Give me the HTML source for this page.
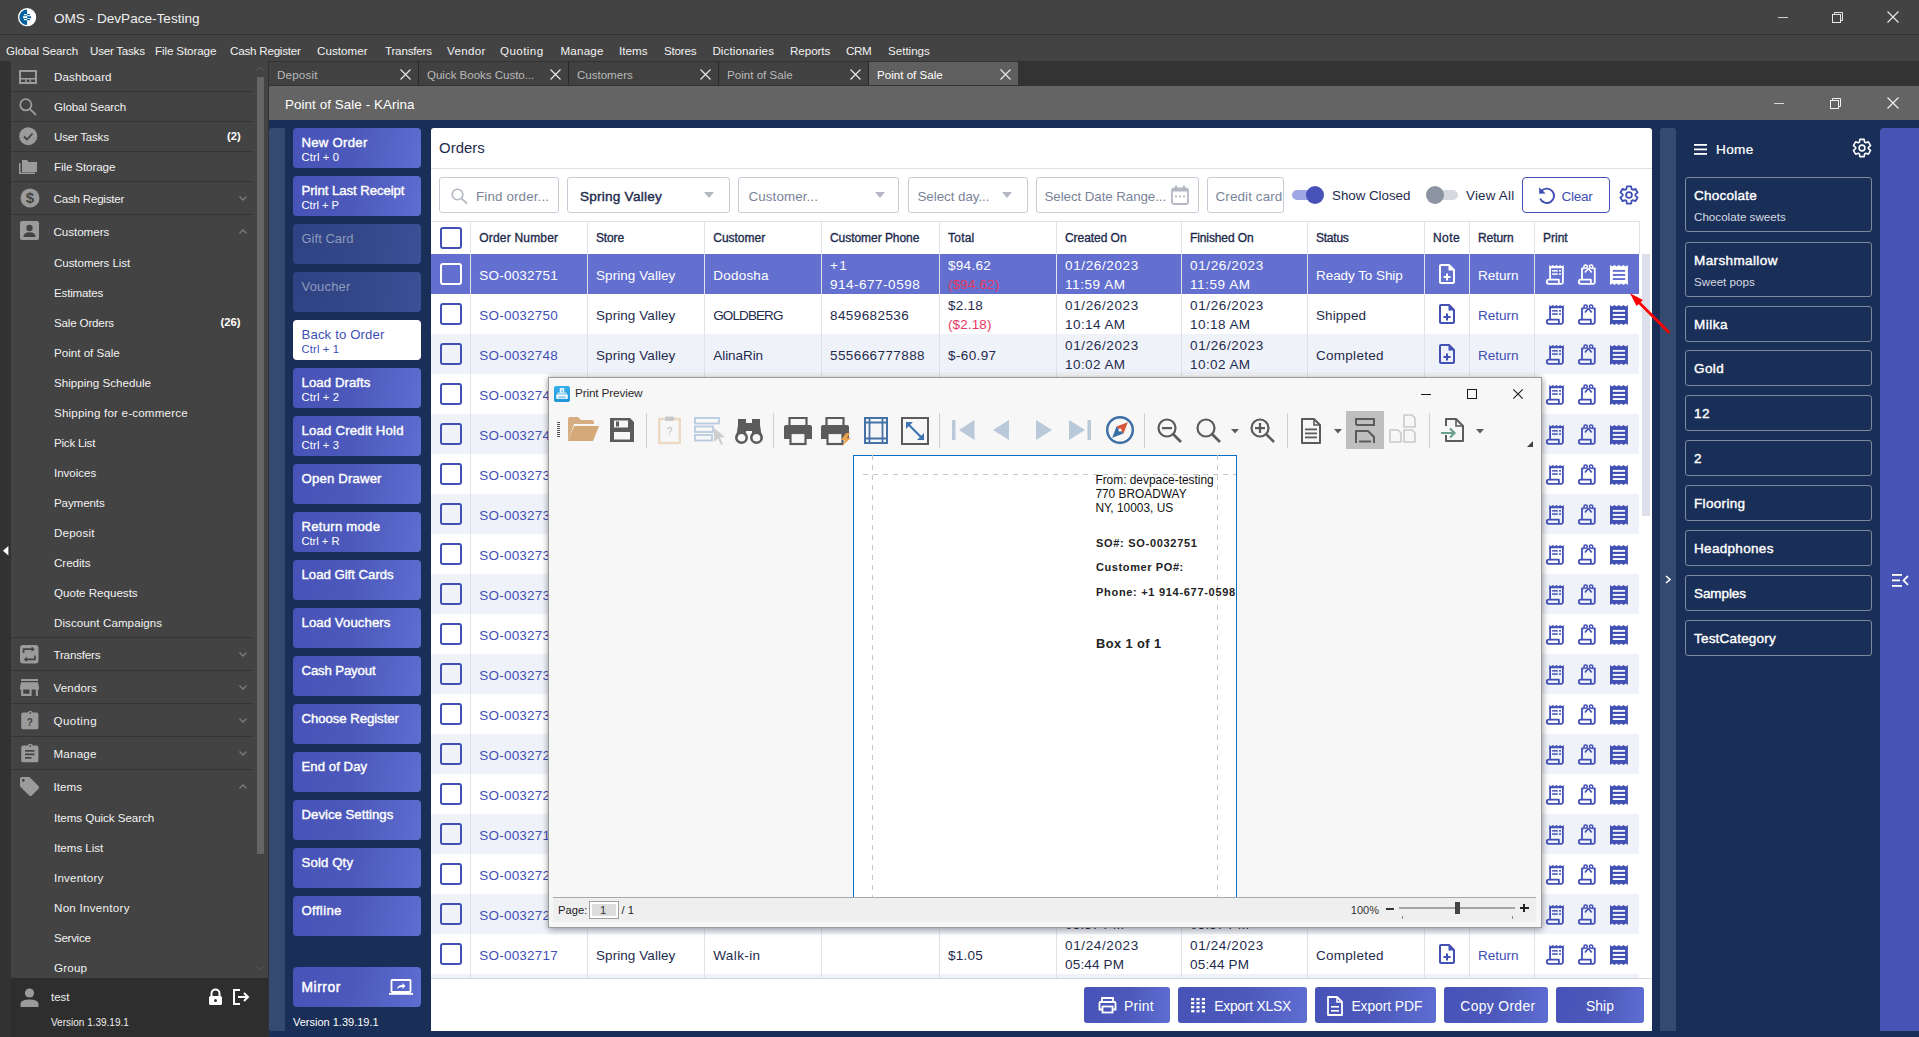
<!DOCTYPE html>
<html><head><meta charset="utf-8"><style>
*{margin:0;padding:0;box-sizing:border-box}
html,body{width:1919px;height:1037px;overflow:hidden;background:#3c3c3c;font-family:"Liberation Sans",sans-serif;position:relative}
.a{position:absolute}
.t{position:absolute;white-space:pre;line-height:1}
svg{position:absolute;overflow:visible}
.btn{position:absolute;left:293px;width:128px;height:40px;border-radius:4px;background:linear-gradient(100deg,#4753b6 0%,#4c59bb 45%,#5e6dd0 100%)}
.btn.dis{background:linear-gradient(100deg,#2f4283 0%,#334789 50%,#3b5096 100%)}
.btn.wh{background:#ffffff}

</style></head><body>
<div class="a " style="left:0px;top:0px;width:1919px;height:34px;background:#434343;"></div>
<div class="a " style="left:0px;top:34px;width:1919px;height:1px;background:#323232;"></div>
<div class="a " style="left:0px;top:35px;width:1919px;height:26px;background:#434343;"></div>
<svg style="left:17.9px;top:7.8px;" width="18.2" height="18.4" viewBox="0 0 18.2 18.4"><circle cx="9.1" cy="9.2" r="9.1" fill="#ffffff"/><path d="M9.1 1.4 A7.8 7.8 0 0 0 9.1 17 Z" fill="#04609e"/><rect x="5.9" y="6.1" width="3.3" height="1.2" fill="#fff"/><rect x="5.1" y="8.2" width="4.1" height="2" fill="#fff"/><rect x="5.9" y="11" width="3.3" height="1.2" fill="#fff"/><rect x="9.1" y="6.1" width="3" height="1.2" rx="0.5" fill="#04609e"/><rect x="9.1" y="8.2" width="4" height="2" rx="0.5" fill="#04609e"/><rect x="9.1" y="11" width="3" height="1.2" rx="0.5" fill="#04609e"/></svg>
<div class="t " style="left:54px;top:11.64px;font-size:13.6px;color:#f0f0f0;letter-spacing:-0.012px;">OMS - DevPace-Testing</div>
<div class="a " style="left:1777.5px;top:16.5px;width:10.5px;height:1.3px;background:#d0d0d0;"></div>
<svg style="left:1832px;top:12px;" width="12" height="11" viewBox="0 0 12 11"><rect x="0.5" y="2.5" width="8" height="8" fill="none" stroke="#e8e8e8"/><path d="M2.5 2.5 V0.5 H10.5 V8.5 H8.5" fill="none" stroke="#e8e8e8"/></svg>
<svg style="left:1887px;top:11px;" width="12" height="12" viewBox="0 0 12 12"><path d="M0.5 0.5 L11.5 11.5 M11.5 0.5 L0.5 11.5" stroke="#e8e8e8" stroke-width="1.2"/></svg>
<div class="t " style="left:6px;top:44.81px;font-size:11.6px;color:#f2f2f2;letter-spacing:-0.105px;">Global Search</div>
<div class="t " style="left:90px;top:44.81px;font-size:11.6px;color:#f2f2f2;letter-spacing:-0.24px;">User Tasks</div>
<div class="t " style="left:155px;top:44.81px;font-size:11.6px;color:#f2f2f2;letter-spacing:-0.106px;">File Storage</div>
<div class="t " style="left:230px;top:44.81px;font-size:11.6px;color:#f2f2f2;letter-spacing:-0.211px;">Cash Register</div>
<div class="t " style="left:317px;top:44.81px;font-size:11.6px;color:#f2f2f2;letter-spacing:0.065px;">Customer</div>
<div class="t " style="left:385px;top:44.81px;font-size:11.6px;color:#f2f2f2;letter-spacing:-0.195px;">Transfers</div>
<div class="t " style="left:447px;top:44.81px;font-size:11.6px;color:#f2f2f2;letter-spacing:0.307px;">Vendor</div>
<div class="t " style="left:500px;top:44.81px;font-size:11.6px;color:#f2f2f2;letter-spacing:0.43px;">Quoting</div>
<div class="t " style="left:560.5px;top:44.81px;font-size:11.6px;color:#f2f2f2;letter-spacing:0.194px;">Manage</div>
<div class="t " style="left:619px;top:44.81px;font-size:11.6px;color:#f2f2f2;letter-spacing:0.078px;">Items</div>
<div class="t " style="left:664px;top:44.81px;font-size:11.6px;color:#f2f2f2;letter-spacing:-0.189px;">Stores</div>
<div class="t " style="left:712.4px;top:44.81px;font-size:11.6px;color:#f2f2f2;letter-spacing:0.089px;">Dictionaries</div>
<div class="t " style="left:790px;top:44.81px;font-size:11.6px;color:#f2f2f2;letter-spacing:-0.045px;">Reports</div>
<div class="t " style="left:846px;top:44.81px;font-size:11.6px;color:#f2f2f2;letter-spacing:-0.397px;">CRM</div>
<div class="t " style="left:888px;top:44.81px;font-size:11.6px;color:#f2f2f2;letter-spacing:-0.006px;">Settings</div>
<div class="a " style="left:0px;top:61px;width:11px;height:976px;background:#323232;"></div>
<div class="a " style="left:11px;top:61px;width:257px;height:917px;background:#434343;"></div>
<div class="a " style="left:257px;top:77px;width:7px;height:777px;background:#656565;"></div>
<svg style="left:256px;top:66px;" width="8" height="5" viewBox="0 0 8 5"><path d="M0.5 4.5 L4 1 L7.5 4.5" fill="none" stroke="#5a5a5a" stroke-width="1"/></svg>
<svg style="left:256px;top:966px;" width="8" height="5" viewBox="0 0 8 5"><path d="M0.5 0.5 L4 4 L7.5 0.5" fill="none" stroke="#5a5a5a" stroke-width="1"/></svg>
<div class="a " style="left:268px;top:61px;width:1px;height:976px;background:#313131;"></div>
<svg style="left:2.75px;top:545.7px;" width="6" height="10" viewBox="0 0 6 10"><path d="M5.35 0 L5.35 9.5 L0 4.75 Z" fill="#ffffff"/></svg>
<div class="a " style="left:11px;top:91px;width:242px;height:1px;background:#363636;"></div>
<div class="a " style="left:11px;top:121px;width:242px;height:1px;background:#363636;"></div>
<div class="a " style="left:11px;top:151px;width:242px;height:1px;background:#363636;"></div>
<div class="a " style="left:11px;top:181px;width:242px;height:1px;background:#363636;"></div>
<div class="a " style="left:11px;top:214px;width:242px;height:1px;background:#363636;"></div>
<div class="a " style="left:11px;top:637px;width:242px;height:1px;background:#363636;"></div>
<div class="a " style="left:11px;top:670px;width:242px;height:1px;background:#363636;"></div>
<div class="a " style="left:11px;top:703px;width:242px;height:1px;background:#363636;"></div>
<div class="a " style="left:11px;top:736px;width:242px;height:1px;background:#363636;"></div>
<div class="a " style="left:11px;top:769px;width:242px;height:1px;background:#363636;"></div>
<div class="t " style="left:54px;top:71.41px;font-size:11.6px;color:#f2f2f2;letter-spacing:0.106px;">Dashboard</div>
<div class="t " style="left:54px;top:101.41px;font-size:11.6px;color:#f2f2f2;letter-spacing:-0.105px;">Global Search</div>
<div class="t " style="left:54px;top:131.41px;font-size:11.6px;color:#f2f2f2;letter-spacing:-0.24px;">User Tasks</div>
<div class="t " style="left:54px;top:161.21px;font-size:11.6px;color:#f2f2f2;letter-spacing:-0.106px;">File Storage</div>
<div class="t " style="left:53.5px;top:192.91px;font-size:11.6px;color:#f2f2f2;letter-spacing:-0.211px;">Cash Register</div>
<div class="t " style="left:53.5px;top:225.91px;font-size:11.6px;color:#f2f2f2;letter-spacing:-0.036px;">Customers</div>
<div class="t " style="left:53.5px;top:648.71px;font-size:11.6px;color:#f2f2f2;letter-spacing:-0.195px;">Transfers</div>
<div class="t " style="left:53.5px;top:681.71px;font-size:11.6px;color:#f2f2f2;letter-spacing:0.142px;">Vendors</div>
<div class="t " style="left:53.5px;top:714.71px;font-size:11.6px;color:#f2f2f2;letter-spacing:0.43px;">Quoting</div>
<div class="t " style="left:53.5px;top:747.71px;font-size:11.6px;color:#f2f2f2;letter-spacing:0.194px;">Manage</div>
<div class="t " style="left:53.5px;top:780.71px;font-size:11.6px;color:#f2f2f2;letter-spacing:0.078px;">Items</div>
<div class="t " style="left:54px;top:257.21px;font-size:11.6px;color:#f2f2f2;letter-spacing:-0.081px;">Customers List</div>
<div class="t " style="left:54px;top:287.21px;font-size:11.6px;color:#f2f2f2;letter-spacing:-0.194px;">Estimates</div>
<div class="t " style="left:54px;top:317.21px;font-size:11.6px;color:#f2f2f2;letter-spacing:-0.173px;">Sale Orders</div>
<div class="t " style="left:54px;top:347.21px;font-size:11.6px;color:#f2f2f2;letter-spacing:-0.003px;">Point of Sale</div>
<div class="t " style="left:54px;top:377.21px;font-size:11.6px;color:#f2f2f2;letter-spacing:0.017px;">Shipping Schedule</div>
<div class="t " style="left:54px;top:407.21px;font-size:11.6px;color:#f2f2f2;letter-spacing:0.186px;">Shipping for e-commerce</div>
<div class="t " style="left:54px;top:437.21px;font-size:11.6px;color:#f2f2f2;letter-spacing:-0.226px;">Pick List</div>
<div class="t " style="left:54px;top:467.21px;font-size:11.6px;color:#f2f2f2;letter-spacing:-0.043px;">Invoices</div>
<div class="t " style="left:54px;top:497.21px;font-size:11.6px;color:#f2f2f2;letter-spacing:-0.123px;">Payments</div>
<div class="t " style="left:54px;top:527.21px;font-size:11.6px;color:#f2f2f2;letter-spacing:0.195px;">Deposit</div>
<div class="t " style="left:54px;top:557.21px;font-size:11.6px;color:#f2f2f2;letter-spacing:-0.044px;">Credits</div>
<div class="t " style="left:54px;top:587.21px;font-size:11.6px;color:#f2f2f2;letter-spacing:-0.009px;">Quote Requests</div>
<div class="t " style="left:54px;top:617.21px;font-size:11.6px;color:#f2f2f2;letter-spacing:0.068px;">Discount Campaigns</div>
<div class="t " style="left:54px;top:812.21px;font-size:11.6px;color:#f2f2f2;letter-spacing:-0.058px;">Items Quick Search</div>
<div class="t " style="left:54px;top:842.21px;font-size:11.6px;color:#f2f2f2;letter-spacing:-0.042px;">Items List</div>
<div class="t " style="left:54px;top:872.21px;font-size:11.6px;color:#f2f2f2;letter-spacing:0.195px;">Inventory</div>
<div class="t " style="left:54px;top:902.21px;font-size:11.6px;color:#f2f2f2;letter-spacing:0.272px;">Non Inventory</div>
<div class="t " style="left:54px;top:932.21px;font-size:11.6px;color:#f2f2f2;letter-spacing:-0.305px;">Service</div>
<div class="t " style="left:54px;top:962.21px;font-size:11.6px;color:#f2f2f2;letter-spacing:0.205px;">Group</div>
<div class="t " style="left:227px;top:131.25px;font-size:11.3px;color:#ffffff;font-weight:700;">(2)</div>
<div class="t " style="left:220.5px;top:317.05px;font-size:11.3px;color:#ffffff;font-weight:700;">(26)</div>
<svg style="left:238.5px;top:195.5px;" width="8" height="5" viewBox="0 0 8 5"><path d="M0.5 0.5 L4 4 L7.5 0.5" fill="none" stroke="#7d7d7d" stroke-width="1.3"/></svg>
<svg style="left:238.5px;top:228.5px;" width="8" height="5" viewBox="0 0 8 5"><path d="M0.5 4.5 L4 1 L7.5 4.5" fill="none" stroke="#7d7d7d" stroke-width="1.3"/></svg>
<svg style="left:238.5px;top:651.5px;" width="8" height="5" viewBox="0 0 8 5"><path d="M0.5 0.5 L4 4 L7.5 0.5" fill="none" stroke="#7d7d7d" stroke-width="1.3"/></svg>
<svg style="left:238.5px;top:684.5px;" width="8" height="5" viewBox="0 0 8 5"><path d="M0.5 0.5 L4 4 L7.5 0.5" fill="none" stroke="#7d7d7d" stroke-width="1.3"/></svg>
<svg style="left:238.5px;top:717.5px;" width="8" height="5" viewBox="0 0 8 5"><path d="M0.5 0.5 L4 4 L7.5 0.5" fill="none" stroke="#7d7d7d" stroke-width="1.3"/></svg>
<svg style="left:238.5px;top:750.5px;" width="8" height="5" viewBox="0 0 8 5"><path d="M0.5 0.5 L4 4 L7.5 0.5" fill="none" stroke="#7d7d7d" stroke-width="1.3"/></svg>
<svg style="left:238.5px;top:783.5px;" width="8" height="5" viewBox="0 0 8 5"><path d="M0.5 4.5 L4 1 L7.5 4.5" fill="none" stroke="#7d7d7d" stroke-width="1.3"/></svg>
<svg style="left:19px;top:70px;" width="18" height="14" viewBox="0 0 18 14"><rect x="1" y="1" width="16" height="12" fill="none" stroke="#9b9b9b" stroke-width="2"/><rect x="1" y="8" width="16" height="1.6" fill="#9b9b9b"/><rect x="6.3" y="8" width="1.4" height="5" fill="#9b9b9b"/><rect x="10.6" y="8" width="1.4" height="5" fill="#9b9b9b"/></svg>
<svg style="left:19px;top:98px;" width="18" height="18" viewBox="0 0 18 18"><circle cx="6.8" cy="6.8" r="5.6" fill="none" stroke="#9b9b9b" stroke-width="1.8"/><path d="M10.8 10.8 L17 17" stroke="#9b9b9b" stroke-width="1.8"/></svg>
<svg style="left:19px;top:127px;" width="19" height="19" viewBox="0 0 19 19"><circle cx="9.2" cy="9.2" r="9" fill="#9b9b9b"/><path d="M5 9.5 L8 12.5 L13.5 6.5" fill="none" stroke="#434343" stroke-width="1.8"/></svg>
<svg style="left:19px;top:159.5px;" width="19" height="16" viewBox="0 0 19 16"><path d="M0 3 V14 H16 V12.5 H1.5 V3 Z" fill="#9b9b9b"/><path d="M3 0 H8 L9.5 2 H18 V12 H3 Z" fill="#9b9b9b"/></svg>
<svg style="left:20px;top:188px;" width="20" height="20" viewBox="0 0 20 20"><circle cx="10" cy="10" r="9.5" fill="#9b9b9b"/><text x="10" y="15.3" font-family="Liberation Sans" font-size="15" font-weight="700" text-anchor="middle" fill="#434343">$</text></svg>
<svg style="left:20px;top:221px;" width="19" height="19" viewBox="0 0 19 19"><rect x="0" y="0" width="19" height="19" rx="2" fill="#9b9b9b"/><circle cx="9.5" cy="7" r="3.2" fill="#434343"/><path d="M3.5 16 Q3.5 11.2 9.5 11.2 Q15.5 11.2 15.5 16 Z" fill="#434343"/></svg>
<svg style="left:20.2px;top:644.6px;" width="18.5" height="18.6" viewBox="0 0 18.5 18.6"><rect x="0" y="0" width="18.5" height="18.6" rx="3" fill="#9b9b9b"/><path d="M3.6 8 V4.2 H12.5" fill="none" stroke="#434343" stroke-width="1.7"/><path d="M11.5 1.6 L14.8 4.2 L11.5 6.8 Z" fill="#434343"/><path d="M14.9 10.6 V14.4 H6" fill="none" stroke="#434343" stroke-width="1.7"/><path d="M7 11.8 L3.7 14.4 L7 17 Z" fill="#434343"/></svg>
<svg style="left:19.9px;top:678.6px;" width="19" height="17" viewBox="0 0 19 17"><g transform="scale(1.056) translate(-3,-4)"><path d="M20 4H4v2h16V4zm1 10v-2l-1-5H4l-1 5v2h1v6h10v-6h4v6h2v-6h1zm-9 4H6v-4h6v4z" fill="#9b9b9b"/></g></svg>
<svg style="left:20.7px;top:710.2px;" width="18" height="20" viewBox="0 0 18 20"><path d="M15.5 2.6 H11.8 C11.4 1.5 10.5 0.8 9.3 0.8 C8.1 0.8 7.2 1.5 6.8 2.6 H2.1 C1 2.6 0.2 3.4 0.2 4.5 V17.4 C0.2 18.5 1 19.3 2.1 19.3 H15.5 C16.6 19.3 17.4 18.5 17.4 17.4 V4.5 C17.4 3.4 16.6 2.6 15.5 2.6 Z" fill="#9b9b9b"/><circle cx="9.3" cy="3.1" r="0.9" fill="#434343"/><text x="8.8" y="15.6" font-family="Liberation Sans" font-size="10" font-weight="700" text-anchor="middle" fill="#434343">?</text></svg>
<svg style="left:20.7px;top:743.2px;" width="18" height="20" viewBox="0 0 18 20"><path d="M15.5 2.6 H11.8 C11.4 1.5 10.5 0.8 9.3 0.8 C8.1 0.8 7.2 1.5 6.8 2.6 H2.1 C1 2.6 0.2 3.4 0.2 4.5 V17.4 C0.2 18.5 1 19.3 2.1 19.3 H15.5 C16.6 19.3 17.4 18.5 17.4 17.4 V4.5 C17.4 3.4 16.6 2.6 15.5 2.6 Z" fill="#9b9b9b"/><circle cx="9.3" cy="3.1" r="0.9" fill="#434343"/><rect x="4" y="7" width="9.5" height="1.7" fill="#434343"/><rect x="4" y="10.5" width="9.5" height="1.7" fill="#434343"/><rect x="4" y="14" width="6.5" height="1.7" fill="#434343"/></svg>
<svg style="left:19.9px;top:776.8px;" width="19" height="19" viewBox="0 0 19 19"><g transform="scale(0.95) translate(-2,-2)"><path d="M21.41 11.58l-9-9C12.05 2.22 11.55 2 11 2H4c-1.1 0-2 .9-2 2v7c0 .55.22 1.05.59 1.42l9 9c.36.36.86.58 1.41.58.55 0 1.05-.22 1.41-.59l7-7c.37-.36.59-.86.59-1.41 0-.55-.23-1.06-.59-1.42zM5.5 7C4.67 7 4 6.33 4 5.5S4.67 4 5.5 4 7 4.67 7 5.5 6.33 7 5.5 7z" fill="#9b9b9b"/></g></svg>
<div class="a " style="left:11px;top:978px;width:257px;height:59px;background:#2e2e2e;"></div>
<svg style="left:20px;top:988px;" width="19" height="19" viewBox="0 0 19 19"><circle cx="9.5" cy="5" r="4.6" fill="#9b9b9b"/><path d="M0.5 19 V16 Q0.5 11.5 9.5 11.5 Q18.5 11.5 18.5 16 V19 Z" fill="#9b9b9b"/></svg>
<div class="t " style="left:51px;top:991.96px;font-size:11.5px;color:#f0f0f0;">test</div>
<svg style="left:208px;top:989px;" width="15" height="16" viewBox="0 0 15 16"><path d="M3.5 7 V4.5 A4 4 0 0 1 11.5 4.5 V7" fill="none" stroke="#fff" stroke-width="2"/><rect x="1" y="7" width="13" height="9" rx="1.5" fill="#fff"/><circle cx="7.5" cy="11.5" r="1.5" fill="#2e2e2e"/></svg>
<svg style="left:233px;top:989px;" width="18" height="16" viewBox="0 0 18 16"><path d="M7 1 H1 V15 H7" fill="none" stroke="#fff" stroke-width="2"/><path d="M5 8 H15 M11 4 L15 8 L11 12" fill="none" stroke="#fff" stroke-width="2"/></svg>
<div class="t " style="left:51px;top:1017.98px;font-size:10.0px;color:#f0f0f0;">Version 1.39.19.1</div>
<div class="a " style="left:269px;top:61px;width:1650px;height:25px;background:#333333;"></div>
<div class="a " style="left:269px;top:62px;width:149px;height:23px;background:#414141;"></div>
<div class="t " style="left:277px;top:69.11px;font-size:11.6px;color:#bababa;letter-spacing:0.195px;">Deposit</div>
<svg style="left:400.0px;top:68.5px;" width="11" height="11" viewBox="0 0 11 11"><path d="M0.5 0.5 L10.5 10.5 M10.5 0.5 L0.5 10.5" stroke="#e8e8e8" stroke-width="1.2"/></svg>
<div class="a " style="left:419px;top:62px;width:149px;height:23px;background:#414141;"></div>
<div class="t " style="left:427px;top:69.11px;font-size:11.6px;color:#bababa;letter-spacing:-0.049px;">Quick Books Custo...</div>
<svg style="left:550.0px;top:68.5px;" width="11" height="11" viewBox="0 0 11 11"><path d="M0.5 0.5 L10.5 10.5 M10.5 0.5 L0.5 10.5" stroke="#e8e8e8" stroke-width="1.2"/></svg>
<div class="a " style="left:569px;top:62px;width:149px;height:23px;background:#414141;"></div>
<div class="t " style="left:577px;top:69.11px;font-size:11.6px;color:#bababa;letter-spacing:-0.036px;">Customers</div>
<svg style="left:700.0px;top:68.5px;" width="11" height="11" viewBox="0 0 11 11"><path d="M0.5 0.5 L10.5 10.5 M10.5 0.5 L0.5 10.5" stroke="#e8e8e8" stroke-width="1.2"/></svg>
<div class="a " style="left:719px;top:62px;width:149px;height:23px;background:#414141;"></div>
<div class="t " style="left:727px;top:69.11px;font-size:11.6px;color:#bababa;letter-spacing:-0.003px;">Point of Sale</div>
<svg style="left:850.0px;top:68.5px;" width="11" height="11" viewBox="0 0 11 11"><path d="M0.5 0.5 L10.5 10.5 M10.5 0.5 L0.5 10.5" stroke="#e8e8e8" stroke-width="1.2"/></svg>
<div class="a " style="left:869px;top:62px;width:149px;height:23px;background:#5f5f5f;"></div>
<div class="t " style="left:877px;top:69.11px;font-size:11.6px;color:#ffffff;letter-spacing:-0.003px;">Point of Sale</div>
<svg style="left:1000.0px;top:68.5px;" width="11" height="11" viewBox="0 0 11 11"><path d="M0.5 0.5 L10.5 10.5 M10.5 0.5 L0.5 10.5" stroke="#e8e8e8" stroke-width="1.2"/></svg>
<div class="a " style="left:418px;top:62px;width:1px;height:23px;background:#2a2a2a;"></div>
<div class="a " style="left:568px;top:62px;width:1px;height:23px;background:#2a2a2a;"></div>
<div class="a " style="left:718px;top:62px;width:1px;height:23px;background:#2a2a2a;"></div>
<div class="a " style="left:868px;top:62px;width:1px;height:23px;background:#2a2a2a;"></div>
<div class="a " style="left:269px;top:86px;width:1650px;height:34px;background:#646464;"></div>
<div class="t " style="left:285px;top:97.74px;font-size:13.4px;color:#ffffff;letter-spacing:0.073px;">Point of Sale - KArina</div>
<div class="a " style="left:1773.5px;top:102.5px;width:10.5px;height:1.3px;background:#d8d8d8;"></div>
<svg style="left:1830px;top:98px;" width="12" height="11" viewBox="0 0 12 11"><rect x="0.5" y="2.5" width="8" height="8" fill="none" stroke="#f0f0f0"/><path d="M2.5 2.5 V0.5 H10.5 V8.5 H8.5" fill="none" stroke="#f0f0f0"/></svg>
<svg style="left:1887px;top:97px;" width="12" height="12" viewBox="0 0 12 12"><path d="M0.5 0.5 L11.5 11.5 M11.5 0.5 L0.5 11.5" stroke="#f0f0f0" stroke-width="1.2"/></svg>
<div class="a " style="left:269px;top:120px;width:1650px;height:917px;background:#1a2f57;"></div><div class="a " style="left:269px;top:128px;width:16px;height:903px;background:#344a6e;border-radius:3px 0 0 3px"></div>
<div class="btn " style="top:128px"><div class="t " style="left:8.5px;top:7.94px;font-size:13.2px;color:#ffffff;letter-spacing:0.252px;-webkit-text-stroke:0.4px #ffffff;">New Order</div><div class="t " style="left:8.5px;top:23.60px;font-size:11.2px;color:#ffffff;letter-spacing:0.172px;">Ctrl + 0</div></div>
<div class="btn " style="top:176px"><div class="t " style="left:8.5px;top:7.94px;font-size:13.2px;color:#ffffff;letter-spacing:-0.062px;-webkit-text-stroke:0.4px #ffffff;">Print Last Receipt</div><div class="t " style="left:8.5px;top:23.60px;font-size:11.2px;color:#ffffff;letter-spacing:-0.012px;">Ctrl + P</div></div>
<div class="btn dis" style="top:224px"><div class="t " style="left:8.5px;top:8.23px;font-size:13.0px;color:#8e9bbd;letter-spacing:0.009px;">Gift Card</div></div>
<div class="btn dis" style="top:272px"><div class="t " style="left:8.5px;top:8.23px;font-size:13.0px;color:#8e9bbd;letter-spacing:0.18px;">Voucher</div></div>
<div class="btn wh" style="top:320px"><div class="t " style="left:8.5px;top:8.14px;font-size:13.2px;color:#3f4fb3;letter-spacing:0.132px;">Back to Order</div><div class="t " style="left:8.5px;top:23.60px;font-size:11.2px;color:#3f4fb3;letter-spacing:0.172px;">Ctrl + 1</div></div>
<div class="btn " style="top:368px"><div class="t " style="left:8.5px;top:7.94px;font-size:13.2px;color:#ffffff;letter-spacing:0.077px;-webkit-text-stroke:0.4px #ffffff;">Load Drafts</div><div class="t " style="left:8.5px;top:23.60px;font-size:11.2px;color:#ffffff;letter-spacing:0.172px;">Ctrl + 2</div></div>
<div class="btn " style="top:416px"><div class="t " style="left:8.5px;top:7.94px;font-size:13.2px;color:#ffffff;letter-spacing:0.203px;-webkit-text-stroke:0.4px #ffffff;">Load Credit Hold</div><div class="t " style="left:8.5px;top:23.60px;font-size:11.2px;color:#ffffff;letter-spacing:0.172px;">Ctrl + 3</div></div>
<div class="btn " style="top:464px"><div class="t " style="left:8.5px;top:7.94px;font-size:13.2px;color:#ffffff;letter-spacing:0.159px;-webkit-text-stroke:0.4px #ffffff;">Open Drawer</div></div>
<div class="btn " style="top:512px"><div class="t " style="left:8.5px;top:7.94px;font-size:13.2px;color:#ffffff;letter-spacing:0.227px;-webkit-text-stroke:0.4px #ffffff;">Return mode</div><div class="t " style="left:8.5px;top:23.60px;font-size:11.2px;color:#ffffff;letter-spacing:-0.038px;">Ctrl + R</div></div>
<div class="btn " style="top:560px"><div class="t " style="left:8.5px;top:7.94px;font-size:13.2px;color:#ffffff;letter-spacing:-0.013px;-webkit-text-stroke:0.4px #ffffff;">Load Gift Cards</div></div>
<div class="btn " style="top:608px"><div class="t " style="left:8.5px;top:7.94px;font-size:13.2px;color:#ffffff;letter-spacing:0.074px;-webkit-text-stroke:0.4px #ffffff;">Load Vouchers</div></div>
<div class="btn " style="top:656px"><div class="t " style="left:8.5px;top:7.94px;font-size:13.2px;color:#ffffff;letter-spacing:-0.137px;-webkit-text-stroke:0.4px #ffffff;">Cash Payout</div></div>
<div class="btn " style="top:704px"><div class="t " style="left:8.5px;top:7.94px;font-size:13.2px;color:#ffffff;letter-spacing:-0.058px;-webkit-text-stroke:0.4px #ffffff;">Choose Register</div></div>
<div class="btn " style="top:752px"><div class="t " style="left:8.5px;top:7.94px;font-size:13.2px;color:#ffffff;letter-spacing:0.04px;-webkit-text-stroke:0.4px #ffffff;">End of Day</div></div>
<div class="btn " style="top:800px"><div class="t " style="left:8.5px;top:7.94px;font-size:13.2px;color:#ffffff;letter-spacing:0.011px;-webkit-text-stroke:0.4px #ffffff;">Device Settings</div></div>
<div class="btn " style="top:848px"><div class="t " style="left:8.5px;top:7.94px;font-size:13.2px;color:#ffffff;letter-spacing:0.134px;-webkit-text-stroke:0.4px #ffffff;">Sold Qty</div></div>
<div class="btn " style="top:896px"><div class="t " style="left:8.5px;top:7.94px;font-size:13.2px;color:#ffffff;letter-spacing:0.34px;-webkit-text-stroke:0.4px #ffffff;">Offline</div></div>
<div class="btn" style="top:967px"><div class="t " style="left:8.5px;top:14.35px;font-size:13.8px;color:#ffffff;letter-spacing:0.547px;-webkit-text-stroke:0.45px #ffffff;">Mirror</div><svg style="left:96px;top:11.5px;" width="24" height="16" viewBox="0 0 24 16"><rect x="2.5" y="1" width="19" height="12" rx="0.5" fill="none" stroke="#fff" stroke-width="1.8"/><rect x="0" y="14" width="24" height="1.8" fill="#fff"/><path d="M8 10 Q8.5 6 13.5 6 V4 L16.5 7 L13.5 10 V8 Q10 8 8 10 Z" fill="#fff"/></svg></div>
<div class="t " style="left:293px;top:1017.30px;font-size:11.0px;color:#ffffff;">Version 1.39.19.1</div>
<div class="a " style="left:431px;top:128px;width:1221px;height:903px;background:#ffffff;border-radius:3px 3px 0 0"></div>
<div class="t " style="left:439px;top:141.42px;font-size:14.9px;color:#1e2b4d;letter-spacing:0.05px;">Orders</div>
<div class="a " style="left:431px;top:168px;width:1221px;height:1px;background:#dcdfe7;"></div>
<div class="a " style="left:439px;top:177px;width:120px;height:36px;background:#fff;border:1px solid #c8ccd6;border-radius:3px;"></div>
<svg style="left:451px;top:188px;" width="17" height="16" viewBox="0 0 17 16"><circle cx="6.5" cy="6.5" r="5.3" fill="none" stroke="#b3b8c2" stroke-width="1.6"/><path d="M10.3 10.3 L16 15.5" stroke="#b3b8c2" stroke-width="1.7"/></svg>
<div class="t " style="left:476px;top:189.74px;font-size:13.4px;color:#7a8499;letter-spacing:0.126px;">Find order...</div>
<div class="a " style="left:567px;top:177px;width:163px;height:36px;background:#fff;border:1px solid #c8ccd6;border-radius:3px;"></div>
<div class="t " style="left:580px;top:189.64px;font-size:13.6px;color:#1e2b4d;letter-spacing:0.22px;-webkit-text-stroke:0.4px #1e2b4d;">Spring Valley</div>
<svg style="left:704px;top:191.8px;" width="10" height="6" viewBox="0 0 10 6"><path d="M0 0 H10 L5 6 Z" fill="#b3b8c2"/></svg>
<div class="a " style="left:738px;top:177px;width:161px;height:36px;background:#fff;border:1px solid #c8ccd6;border-radius:3px;"></div>
<div class="t " style="left:748.5px;top:189.74px;font-size:13.4px;color:#7a8499;letter-spacing:0.092px;">Customer...</div>
<svg style="left:874.5px;top:191.8px;" width="10" height="6" viewBox="0 0 10 6"><path d="M0 0 H10 L5 6 Z" fill="#b3b8c2"/></svg>
<div class="a " style="left:908px;top:177px;width:120px;height:36px;background:#fff;border:1px solid #c8ccd6;border-radius:3px;"></div>
<div class="t " style="left:917.5px;top:189.74px;font-size:13.4px;color:#7a8499;letter-spacing:-0.06px;">Select day...</div>
<svg style="left:1002px;top:191.8px;" width="10" height="6" viewBox="0 0 10 6"><path d="M0 0 H10 L5 6 Z" fill="#b3b8c2"/></svg>
<div class="a " style="left:1036px;top:177px;width:163px;height:36px;background:#fff;border:1px solid #c8ccd6;border-radius:3px;"></div>
<div class="t " style="left:1044.5px;top:189.74px;font-size:13.4px;color:#7a8499;letter-spacing:-0.101px;">Select Date Range...</div>
<svg style="left:1171px;top:185px;" width="18" height="20" viewBox="0 0 18 20"><rect x="1" y="3.5" width="16" height="15.5" rx="2" fill="none" stroke="#b3b8c2" stroke-width="1.8"/><rect x="1" y="3.5" width="16" height="3" fill="#b3b8c2"/><rect x="4" y="0.5" width="2" height="4" fill="#b3b8c2"/><rect x="12" y="0.5" width="2" height="4" fill="#b3b8c2"/><rect x="4" y="10.5" width="2" height="1.8" fill="#b3b8c2"/><rect x="8" y="10.5" width="2" height="1.8" fill="#b3b8c2"/><rect x="12" y="10.5" width="2" height="1.8" fill="#b3b8c2"/></svg>
<div class="a " style="left:1207px;top:177px;width:77px;height:36px;background:#fff;border:1px solid #c8ccd6;border-radius:3px;overflow:hidden"><div class="t " style="left:7.5px;top:11.74px;font-size:13.4px;color:#7a8499;letter-spacing:0.131px;">Credit card</div></div>
<div class="a " style="left:1292px;top:190px;width:30px;height:10px;background:#9ea6e3;border-radius:5px"></div>
<div class="a " style="left:1305.5px;top:186px;width:18px;height:18px;background:#4752b8;border-radius:50%"></div>
<div class="t " style="left:1332px;top:189.04px;font-size:13.4px;color:#1e2b4d;letter-spacing:-0.052px;">Show Closed</div>
<div class="a " style="left:1427px;top:190px;width:31px;height:10px;background:#d5d8df;border-radius:5px"></div>
<div class="a " style="left:1425.5px;top:186px;width:18px;height:18px;background:#8c93a1;border-radius:50%"></div>
<div class="t " style="left:1466px;top:189.04px;font-size:13.4px;color:#1e2b4d;letter-spacing:0.22px;">View All</div>
<div class="a " style="left:1522px;top:177px;width:88px;height:36px;background:#fff;border:1px solid #4150b5;border-radius:4px"></div>
<svg style="left:1537px;top:186px;" width="20" height="20" viewBox="0 0 20 20"><path d="M4.3 5.2 A7.2 7.2 0 1 1 3.2 12.6" fill="none" stroke="#3f4fb3" stroke-width="1.9"/><path d="M2.2 1.2 L2.2 7.7 L8.6 7.4 Z" fill="#3f4fb3"/></svg>
<div class="t " style="left:1561.5px;top:189.64px;font-size:13.6px;color:#3f4fb3;letter-spacing:-0.304px;">Clear</div>
<svg style="left:1619.1px;top:185px;" width="20" height="20" viewBox="0 0 20 20"><path d="M7.40 4.15 L7.85 1.36 L12.15 1.36 L12.60 4.15 L13.76 4.82 L16.40 3.82 L18.56 7.55 L16.36 9.33 L16.36 10.67 L18.56 12.45 L16.40 16.18 L13.76 15.18 L12.60 15.85 L12.15 18.64 L7.85 18.64 L7.40 15.85 L6.24 15.18 L3.60 16.18 L1.44 12.45 L3.64 10.67 L3.64 9.33 L1.44 7.55 L3.60 3.82 L6.24 4.82 Z" fill="none" stroke="#3f4fb3" stroke-width="1.8" stroke-linejoin="round"/><circle cx="10" cy="10" r="2.9" fill="none" stroke="#3f4fb3" stroke-width="1.8"/></svg>
<div class="a " style="left:1084px;top:987px;width:86px;height:36px;background:linear-gradient(100deg,#4753b6 0%,#4c59bb 50%,#5f6ed1 100%);border-radius:3px"></div>
<div class="t " style="left:1124px;top:1000.10px;font-size:13.9px;color:#ffffff;letter-spacing:0.244px;">Print</div>
<div class="a " style="left:1178px;top:987px;width:129px;height:36px;background:linear-gradient(100deg,#4753b6 0%,#4c59bb 50%,#5f6ed1 100%);border-radius:3px"></div>
<div class="t " style="left:1214.2px;top:1000.10px;font-size:13.9px;color:#ffffff;letter-spacing:-0.255px;">Export XLSX</div>
<div class="a " style="left:1315px;top:987px;width:121px;height:36px;background:linear-gradient(100deg,#4753b6 0%,#4c59bb 50%,#5f6ed1 100%);border-radius:3px"></div>
<div class="t " style="left:1351.4px;top:1000.10px;font-size:13.9px;color:#ffffff;letter-spacing:-0.088px;">Export PDF</div>
<div class="a " style="left:1444px;top:987px;width:104px;height:36px;background:linear-gradient(100deg,#4753b6 0%,#4c59bb 50%,#5f6ed1 100%);border-radius:3px"></div>
<div class="t " style="left:1460.3px;top:1000.10px;font-size:13.9px;color:#ffffff;letter-spacing:0.335px;">Copy Order</div>
<div class="a " style="left:1556px;top:987px;width:88px;height:36px;background:linear-gradient(100deg,#4753b6 0%,#4c59bb 50%,#5f6ed1 100%);border-radius:3px"></div>
<div class="t " style="left:1586px;top:1000.10px;font-size:13.9px;color:#ffffff;letter-spacing:0.042px;">Ship</div>
<svg style="left:1098px;top:997px;" width="19" height="16" viewBox="0 0 19 16"><path d="M4 5 V1 H15 V5" fill="none" stroke="#fff" stroke-width="1.8"/><path d="M4 12.5 H1.5 V6 Q1.5 5 2.5 5 H16.5 Q17.5 5 17.5 6 V12.5 H15" fill="none" stroke="#fff" stroke-width="1.8"/><rect x="4.5" y="9.5" width="10" height="6" fill="none" stroke="#fff" stroke-width="1.8"/></svg>
<svg style="left:1191px;top:998px;" width="15" height="15" viewBox="0 0 15 15"><rect x="0" y="0" width="3.2" height="2.4" fill="#fff"/><rect x="0" y="4" width="3.2" height="2.4" fill="#fff"/><rect x="0" y="8" width="3.2" height="2.4" fill="#fff"/><rect x="0" y="12" width="3.2" height="2.4" fill="#fff"/><rect x="5.4" y="0" width="3.2" height="2.4" fill="#fff"/><rect x="5.4" y="4" width="3.2" height="2.4" fill="#fff"/><rect x="5.4" y="8" width="3.2" height="2.4" fill="#fff"/><rect x="5.4" y="12" width="3.2" height="2.4" fill="#fff"/><rect x="10.8" y="0" width="3.2" height="2.4" fill="#fff"/><rect x="10.8" y="4" width="3.2" height="2.4" fill="#fff"/><rect x="10.8" y="8" width="3.2" height="2.4" fill="#fff"/><rect x="10.8" y="12" width="3.2" height="2.4" fill="#fff"/></svg>
<svg style="left:1327px;top:995.5px;" width="16" height="20" viewBox="0 0 16 20"><path d="M1 1 H10 L15 6 V19 H1 Z" fill="none" stroke="#fff" stroke-width="1.8" stroke-linejoin="round"/><path d="M10 1 V6 H15" fill="none" stroke="#fff" stroke-width="1.5"/><rect x="4" y="10" width="8" height="1.6" fill="#fff"/><rect x="4" y="14" width="8" height="1.6" fill="#fff"/></svg>
<div class="a " style="left:1660px;top:128px;width:16px;height:903px;background:#344a6e;border-radius:3px 3px 0 0"></div>
<svg style="left:1665px;top:575px;" width="6" height="9" viewBox="0 0 6 9"><path d="M1 1 L5 4.5 L1 8" fill="none" stroke="#fff" stroke-width="1.6"/></svg>
<svg style="left:1693.5px;top:144px;" width="13" height="11" viewBox="0 0 13 11"><rect x="0" y="0" width="13" height="1.8" fill="#fff"/><rect x="0" y="4.5" width="13" height="1.8" fill="#fff"/><rect x="0" y="9" width="13" height="1.8" fill="#fff"/></svg>
<div class="t " style="left:1716px;top:142.74px;font-size:13.6px;color:#ffffff;letter-spacing:0.369px;-webkit-text-stroke:0.2px #fff;">Home</div>
<svg style="left:1852px;top:138px;" width="20" height="20" viewBox="0 0 20 20"><path d="M7.40 4.15 L7.85 1.36 L12.15 1.36 L12.60 4.15 L13.76 4.82 L16.40 3.82 L18.56 7.55 L16.36 9.33 L16.36 10.67 L18.56 12.45 L16.40 16.18 L13.76 15.18 L12.60 15.85 L12.15 18.64 L7.85 18.64 L7.40 15.85 L6.24 15.18 L3.60 16.18 L1.44 12.45 L3.64 10.67 L3.64 9.33 L1.44 7.55 L3.60 3.82 L6.24 4.82 Z" fill="none" stroke="#ffffff" stroke-width="1.6" stroke-linejoin="round"/><circle cx="10" cy="10" r="2.9" fill="none" stroke="#ffffff" stroke-width="1.6"/></svg>
<div class="a " style="left:1685px;top:177px;width:187px;height:55px;background:transparent;border:1px solid #7e889c;border-radius:3px"></div>
<div class="t " style="left:1694px;top:189.49px;font-size:13.5px;color:#ffffff;letter-spacing:0.251px;-webkit-text-stroke:0.4px #ffffff;">Chocolate</div>
<div class="t " style="left:1694px;top:211.01px;font-size:11.6px;color:#d6dae2;letter-spacing:0.015px;">Chocolate sweets</div>
<div class="a " style="left:1685px;top:241.5px;width:187px;height:55px;background:transparent;border:1px solid #7e889c;border-radius:3px"></div>
<div class="t " style="left:1694px;top:253.99px;font-size:13.5px;color:#ffffff;letter-spacing:0.388px;-webkit-text-stroke:0.4px #ffffff;">Marshmallow</div>
<div class="t " style="left:1694px;top:275.51px;font-size:11.6px;color:#d6dae2;letter-spacing:0.028px;">Sweet pops</div>
<div class="a " style="left:1685px;top:305.5px;width:187px;height:36px;background:transparent;border:1px solid #7e889c;border-radius:3px"></div>
<div class="t " style="left:1694px;top:317.79px;font-size:13.5px;color:#ffffff;letter-spacing:0.476px;-webkit-text-stroke:0.4px #ffffff;">Milka</div>
<div class="a " style="left:1685px;top:350px;width:187px;height:36px;background:transparent;border:1px solid #7e889c;border-radius:3px"></div>
<div class="t " style="left:1694px;top:362.29px;font-size:13.5px;color:#ffffff;letter-spacing:0.389px;-webkit-text-stroke:0.4px #ffffff;">Gold</div>
<div class="a " style="left:1685px;top:395px;width:187px;height:36px;background:transparent;border:1px solid #7e889c;border-radius:3px"></div>
<div class="t " style="left:1694px;top:407.29px;font-size:13.5px;color:#ffffff;letter-spacing:0.577px;-webkit-text-stroke:0.4px #ffffff;">12</div>
<div class="a " style="left:1685px;top:440px;width:187px;height:36px;background:transparent;border:1px solid #7e889c;border-radius:3px"></div>
<div class="t " style="left:1694px;top:452.29px;font-size:13.5px;color:#ffffff;letter-spacing:0.577px;-webkit-text-stroke:0.4px #ffffff;">2</div>
<div class="a " style="left:1685px;top:485px;width:187px;height:36px;background:transparent;border:1px solid #7e889c;border-radius:3px"></div>
<div class="t " style="left:1694px;top:497.29px;font-size:13.5px;color:#ffffff;letter-spacing:0.336px;-webkit-text-stroke:0.4px #ffffff;">Flooring</div>
<div class="a " style="left:1685px;top:530px;width:187px;height:36px;background:transparent;border:1px solid #7e889c;border-radius:3px"></div>
<div class="t " style="left:1694px;top:542.29px;font-size:13.5px;color:#ffffff;letter-spacing:0.317px;-webkit-text-stroke:0.4px #ffffff;">Headphones</div>
<div class="a " style="left:1685px;top:575px;width:187px;height:36px;background:transparent;border:1px solid #7e889c;border-radius:3px"></div>
<div class="t " style="left:1694px;top:587.29px;font-size:13.5px;color:#ffffff;letter-spacing:-0.094px;-webkit-text-stroke:0.4px #ffffff;">Samples</div>
<div class="a " style="left:1685px;top:620px;width:187px;height:36px;background:transparent;border:1px solid #7e889c;border-radius:3px"></div>
<div class="t " style="left:1694px;top:632.29px;font-size:13.5px;color:#ffffff;letter-spacing:0.195px;-webkit-text-stroke:0.4px #ffffff;">TestCategory</div>
<div class="a " style="left:1880px;top:128px;width:39px;height:903px;background:#4754b5;border-radius:4px 0 0 0"></div>
<svg style="left:1892px;top:574px;" width="17" height="13" viewBox="0 0 17 13"><rect x="0" y="0" width="10" height="1.8" fill="#fff"/><rect x="0" y="5.5" width="8" height="1.8" fill="#fff"/><rect x="0" y="11" width="10" height="1.8" fill="#fff"/><path d="M16 2 L11.5 6.4 L16 10.8" fill="none" stroke="#fff" stroke-width="1.8"/></svg><div class="a" style="left:431px;top:221px;width:1221px;height:757px;overflow:hidden">
<div class="a " style="left:0px;top:0px;width:1208px;height:1px;background:#dfe2ea;"></div><div class="t " style="left:48.25px;top:11.12px;font-size:12.0px;color:#1e2b4d;letter-spacing:0.191px;-webkit-text-stroke:0.35px #1e2b4d;">Order Number</div><div class="t " style="left:165px;top:11.12px;font-size:12.0px;color:#1e2b4d;letter-spacing:-0.134px;-webkit-text-stroke:0.35px #1e2b4d;">Store</div><div class="t " style="left:282.25px;top:11.12px;font-size:12.0px;color:#1e2b4d;letter-spacing:-0.019px;-webkit-text-stroke:0.35px #1e2b4d;">Customer</div><div class="t " style="left:399px;top:11.12px;font-size:12.0px;color:#1e2b4d;letter-spacing:-0.052px;-webkit-text-stroke:0.35px #1e2b4d;">Customer Phone</div><div class="t " style="left:517px;top:11.12px;font-size:12.0px;color:#1e2b4d;letter-spacing:0.233px;-webkit-text-stroke:0.35px #1e2b4d;">Total</div><div class="t " style="left:634px;top:11.12px;font-size:12.0px;color:#1e2b4d;letter-spacing:-0.051px;-webkit-text-stroke:0.35px #1e2b4d;">Created On</div><div class="t " style="left:759px;top:11.12px;font-size:12.0px;color:#1e2b4d;letter-spacing:-0.108px;-webkit-text-stroke:0.35px #1e2b4d;">Finished On</div><div class="t " style="left:885px;top:11.12px;font-size:12.0px;color:#1e2b4d;letter-spacing:-0.241px;-webkit-text-stroke:0.35px #1e2b4d;">Status</div><div class="t " style="left:1002px;top:11.12px;font-size:12.0px;color:#1e2b4d;letter-spacing:0.41px;-webkit-text-stroke:0.35px #1e2b4d;">Note</div><div class="t " style="left:1047px;top:11.12px;font-size:12.0px;color:#1e2b4d;letter-spacing:-0.079px;-webkit-text-stroke:0.35px #1e2b4d;">Return</div><div class="t " style="left:1112px;top:11.12px;font-size:12.0px;color:#1e2b4d;letter-spacing:-0.002px;-webkit-text-stroke:0.35px #1e2b4d;">Print</div><div class="a " style="left:0px;top:33px;width:1208px;height:40px;background:#6370d0;"></div><div class="a " style="left:9px;top:42px;width:22px;height:22px;background:transparent;border:2px solid #ffffff;border-radius:3px"></div><div class="t " style="left:48.25px;top:47.99px;font-size:13.5px;color:#ffffff;letter-spacing:0.219px;">SO-0032751</div><div class="t " style="left:165px;top:47.99px;font-size:13.5px;color:#ffffff;letter-spacing:0.069px;">Spring Valley</div><div class="t " style="left:282.25px;top:47.99px;font-size:13.5px;color:#ffffff;letter-spacing:0.216px;">Dodosha</div><div class="t " style="left:399px;top:37.69px;font-size:13.5px;color:#ffffff;letter-spacing:1.245px;">+1</div><div class="t " style="left:399px;top:56.59px;font-size:13.5px;color:#ffffff;letter-spacing:0.509px;">914-677-0598</div><div class="t " style="left:517px;top:37.69px;font-size:13.5px;color:#ffffff;letter-spacing:0.284px;">$94.62</div><div class="t " style="left:517px;top:56.59px;font-size:13.5px;color:#e8395f;letter-spacing:0.14px;">($94.62)</div><div class="t " style="left:634px;top:37.69px;font-size:13.5px;color:#ffffff;letter-spacing:0.634px;">01/26/2023</div><div class="t " style="left:634px;top:56.59px;font-size:13.5px;color:#ffffff;letter-spacing:0.562px;">11:59 AM</div><div class="t " style="left:759px;top:37.69px;font-size:13.5px;color:#ffffff;letter-spacing:0.634px;">01/26/2023</div><div class="t " style="left:759px;top:56.59px;font-size:13.5px;color:#ffffff;letter-spacing:0.562px;">11:59 AM</div><div class="t " style="left:885px;top:47.99px;font-size:13.5px;color:#ffffff;letter-spacing:-0.063px;">Ready To Ship</div><svg style="left:1007.5px;top:43px;" width="16" height="20" viewBox="0 0 16 20"><path d="M2 1 H10 L15 6 V18 Q15 19 14 19 H2 Q1 19 1 18 V2 Q1 1 2 1 Z" fill="none" stroke="#ffffff" stroke-width="2" stroke-linejoin="round"/><path d="M9.5 1 L15 6.5 H9.5 Z" fill="#ffffff"/><path d="M8 9.5 V16.5 M4.5 13 H11.5" stroke="#ffffff" stroke-width="2"/></svg><div class="t " style="left:1047px;top:48.04px;font-size:13.6px;color:#ffffff;letter-spacing:-0.033px;">Return</div><svg style="left:1109px;top:33px;" width="95" height="40" viewBox="0 0 95 40"><path d="M9.20 11.00 L11.02 12.30 L12.85 11.00 L14.68 12.30 L16.50 11.00 L18.32 12.30 L20.15 11.00 L21.98 12.30 L23.80 11.00 L23.80 14.20 L9.20 14.20 Z" fill="#ffffff"/><path d="M10.1 25 V13 M22.9 13 V28.3 Q22.9 29.85 21.3 29.85 H8.6 Q6.8 29.85 6.8 27.8 Q6.8 25.7 8.6 25.7 H18.9 V29.5" fill="none" stroke="#ffffff" stroke-width="1.8" stroke-linejoin="round"/><rect x="12.1" y="16.1" width="5.7" height="1.5" fill="#ffffff"/><rect x="19" y="16.1" width="2" height="1.5" fill="#ffffff"/><rect x="12.1" y="19.3" width="5.7" height="1.5" fill="#ffffff"/><rect x="19" y="19.3" width="2" height="1.5" fill="#ffffff"/><path d="M42 25 V14.3 H44.3 M52.3 14.3 H54.8 V28.3 Q54.8 29.85 53.2 29.85 H40.6 Q38.8 29.85 38.8 27.8 Q38.8 25.7 40.6 25.7 H50.9 V29.5" fill="none" stroke="#ffffff" stroke-width="1.8" stroke-linejoin="round"/><circle cx="45.6" cy="12.6" r="1.7" fill="none" stroke="#ffffff" stroke-width="1.5"/><circle cx="51.1" cy="12.6" r="1.7" fill="none" stroke="#ffffff" stroke-width="1.5"/><path d="M48.35 14.2 L45 18.6 M48.35 14.2 L51.7 18.6" fill="none" stroke="#ffffff" stroke-width="1.6"/><path d="M70.00 11.00 L72.24 12.50 L74.47 11.00 L76.71 12.50 L78.95 11.00 L81.19 12.50 L83.43 11.00 L85.66 12.50 L87.90 11.00 L87.90 31.00 L85.66 29.60 L83.43 31.00 L81.19 29.60 L78.95 31.00 L76.71 29.60 L74.47 31.00 L72.24 29.60 L70.00 31.00 Z" fill="#ffffff"/><rect x="72.8" y="15.9" width="12.3" height="1.9" fill="#6370d0"/><rect x="72.8" y="20.0" width="12.3" height="1.9" fill="#6370d0"/><rect x="72.8" y="24.1" width="12.3" height="1.9" fill="#6370d0"/></svg><div class="a " style="left:0px;top:73px;width:1208px;height:40px;background:#ffffff;"></div><div class="a " style="left:9px;top:82px;width:22px;height:22px;background:transparent;border:2px solid #4150b5;border-radius:3px"></div><div class="t " style="left:48.25px;top:87.99px;font-size:13.5px;color:#4150b5;letter-spacing:0.219px;">SO-0032750</div><div class="t " style="left:165px;top:87.99px;font-size:13.5px;color:#1e2b4d;letter-spacing:0.069px;">Spring Valley</div><div class="t " style="left:282.25px;top:87.99px;font-size:13.5px;color:#1e2b4d;letter-spacing:-0.902px;">GOLDBERG</div><div class="t " style="left:399px;top:87.99px;font-size:13.5px;color:#1e2b4d;letter-spacing:0.408px;">8459682536</div><div class="t " style="left:517px;top:77.69px;font-size:13.5px;color:#1e2b4d;letter-spacing:0.26px;">$2.18</div><div class="t " style="left:517px;top:96.59px;font-size:13.5px;color:#e8395f;letter-spacing:0.102px;">($2.18)</div><div class="t " style="left:634px;top:77.69px;font-size:13.5px;color:#1e2b4d;letter-spacing:0.634px;">01/26/2023</div><div class="t " style="left:634px;top:96.59px;font-size:13.5px;color:#1e2b4d;letter-spacing:0.437px;">10:14 AM</div><div class="t " style="left:759px;top:77.69px;font-size:13.5px;color:#1e2b4d;letter-spacing:0.634px;">01/26/2023</div><div class="t " style="left:759px;top:96.59px;font-size:13.5px;color:#1e2b4d;letter-spacing:0.437px;">10:18 AM</div><div class="t " style="left:885px;top:87.99px;font-size:13.5px;color:#1e2b4d;letter-spacing:0.084px;">Shipped</div><svg style="left:1007.5px;top:83px;" width="16" height="20" viewBox="0 0 16 20"><path d="M2 1 H10 L15 6 V18 Q15 19 14 19 H2 Q1 19 1 18 V2 Q1 1 2 1 Z" fill="none" stroke="#4150b5" stroke-width="2" stroke-linejoin="round"/><path d="M9.5 1 L15 6.5 H9.5 Z" fill="#4150b5"/><path d="M8 9.5 V16.5 M4.5 13 H11.5" stroke="#4150b5" stroke-width="2"/></svg><div class="t " style="left:1047px;top:88.04px;font-size:13.6px;color:#4150b5;letter-spacing:-0.033px;">Return</div><svg style="left:1109px;top:73px;" width="95" height="40" viewBox="0 0 95 40"><path d="M9.20 11.00 L11.02 12.30 L12.85 11.00 L14.68 12.30 L16.50 11.00 L18.32 12.30 L20.15 11.00 L21.98 12.30 L23.80 11.00 L23.80 14.20 L9.20 14.20 Z" fill="#4150b5"/><path d="M10.1 25 V13 M22.9 13 V28.3 Q22.9 29.85 21.3 29.85 H8.6 Q6.8 29.85 6.8 27.8 Q6.8 25.7 8.6 25.7 H18.9 V29.5" fill="none" stroke="#4150b5" stroke-width="1.8" stroke-linejoin="round"/><rect x="12.1" y="16.1" width="5.7" height="1.5" fill="#4150b5"/><rect x="19" y="16.1" width="2" height="1.5" fill="#4150b5"/><rect x="12.1" y="19.3" width="5.7" height="1.5" fill="#4150b5"/><rect x="19" y="19.3" width="2" height="1.5" fill="#4150b5"/><path d="M42 25 V14.3 H44.3 M52.3 14.3 H54.8 V28.3 Q54.8 29.85 53.2 29.85 H40.6 Q38.8 29.85 38.8 27.8 Q38.8 25.7 40.6 25.7 H50.9 V29.5" fill="none" stroke="#4150b5" stroke-width="1.8" stroke-linejoin="round"/><circle cx="45.6" cy="12.6" r="1.7" fill="none" stroke="#4150b5" stroke-width="1.5"/><circle cx="51.1" cy="12.6" r="1.7" fill="none" stroke="#4150b5" stroke-width="1.5"/><path d="M48.35 14.2 L45 18.6 M48.35 14.2 L51.7 18.6" fill="none" stroke="#4150b5" stroke-width="1.6"/><path d="M70.00 11.00 L72.24 12.50 L74.47 11.00 L76.71 12.50 L78.95 11.00 L81.19 12.50 L83.43 11.00 L85.66 12.50 L87.90 11.00 L87.90 31.00 L85.66 29.60 L83.43 31.00 L81.19 29.60 L78.95 31.00 L76.71 29.60 L74.47 31.00 L72.24 29.60 L70.00 31.00 Z" fill="#4150b5"/><rect x="72.8" y="15.9" width="12.3" height="1.9" fill="#ffffff"/><rect x="72.8" y="20.0" width="12.3" height="1.9" fill="#ffffff"/><rect x="72.8" y="24.1" width="12.3" height="1.9" fill="#ffffff"/></svg><div class="a " style="left:0px;top:113px;width:1208px;height:40px;background:#f0f2fa;"></div><div class="a " style="left:9px;top:122px;width:22px;height:22px;background:transparent;border:2px solid #4150b5;border-radius:3px"></div><div class="t " style="left:48.25px;top:127.99px;font-size:13.5px;color:#4150b5;letter-spacing:0.219px;">SO-0032748</div><div class="t " style="left:165px;top:127.99px;font-size:13.5px;color:#1e2b4d;letter-spacing:0.069px;">Spring Valley</div><div class="t " style="left:282.25px;top:127.99px;font-size:13.5px;color:#1e2b4d;letter-spacing:-0.058px;">AlinaRin</div><div class="t " style="left:399px;top:127.99px;font-size:13.5px;color:#1e2b4d;letter-spacing:0.408px;">555666777888</div><div class="t " style="left:517px;top:127.99px;font-size:13.5px;color:#1e2b4d;letter-spacing:0.389px;">$-60.97</div><div class="t " style="left:634px;top:117.69px;font-size:13.5px;color:#1e2b4d;letter-spacing:0.634px;">01/26/2023</div><div class="t " style="left:634px;top:136.59px;font-size:13.5px;color:#1e2b4d;letter-spacing:0.437px;">10:02 AM</div><div class="t " style="left:759px;top:117.69px;font-size:13.5px;color:#1e2b4d;letter-spacing:0.634px;">01/26/2023</div><div class="t " style="left:759px;top:136.59px;font-size:13.5px;color:#1e2b4d;letter-spacing:0.437px;">10:02 AM</div><div class="t " style="left:885px;top:127.99px;font-size:13.5px;color:#1e2b4d;letter-spacing:0.277px;">Completed</div><svg style="left:1007.5px;top:123px;" width="16" height="20" viewBox="0 0 16 20"><path d="M2 1 H10 L15 6 V18 Q15 19 14 19 H2 Q1 19 1 18 V2 Q1 1 2 1 Z" fill="none" stroke="#4150b5" stroke-width="2" stroke-linejoin="round"/><path d="M9.5 1 L15 6.5 H9.5 Z" fill="#4150b5"/><path d="M8 9.5 V16.5 M4.5 13 H11.5" stroke="#4150b5" stroke-width="2"/></svg><div class="t " style="left:1047px;top:128.04px;font-size:13.6px;color:#4150b5;letter-spacing:-0.033px;">Return</div><svg style="left:1109px;top:113px;" width="95" height="40" viewBox="0 0 95 40"><path d="M9.20 11.00 L11.02 12.30 L12.85 11.00 L14.68 12.30 L16.50 11.00 L18.32 12.30 L20.15 11.00 L21.98 12.30 L23.80 11.00 L23.80 14.20 L9.20 14.20 Z" fill="#4150b5"/><path d="M10.1 25 V13 M22.9 13 V28.3 Q22.9 29.85 21.3 29.85 H8.6 Q6.8 29.85 6.8 27.8 Q6.8 25.7 8.6 25.7 H18.9 V29.5" fill="none" stroke="#4150b5" stroke-width="1.8" stroke-linejoin="round"/><rect x="12.1" y="16.1" width="5.7" height="1.5" fill="#4150b5"/><rect x="19" y="16.1" width="2" height="1.5" fill="#4150b5"/><rect x="12.1" y="19.3" width="5.7" height="1.5" fill="#4150b5"/><rect x="19" y="19.3" width="2" height="1.5" fill="#4150b5"/><path d="M42 25 V14.3 H44.3 M52.3 14.3 H54.8 V28.3 Q54.8 29.85 53.2 29.85 H40.6 Q38.8 29.85 38.8 27.8 Q38.8 25.7 40.6 25.7 H50.9 V29.5" fill="none" stroke="#4150b5" stroke-width="1.8" stroke-linejoin="round"/><circle cx="45.6" cy="12.6" r="1.7" fill="none" stroke="#4150b5" stroke-width="1.5"/><circle cx="51.1" cy="12.6" r="1.7" fill="none" stroke="#4150b5" stroke-width="1.5"/><path d="M48.35 14.2 L45 18.6 M48.35 14.2 L51.7 18.6" fill="none" stroke="#4150b5" stroke-width="1.6"/><path d="M70.00 11.00 L72.24 12.50 L74.47 11.00 L76.71 12.50 L78.95 11.00 L81.19 12.50 L83.43 11.00 L85.66 12.50 L87.90 11.00 L87.90 31.00 L85.66 29.60 L83.43 31.00 L81.19 29.60 L78.95 31.00 L76.71 29.60 L74.47 31.00 L72.24 29.60 L70.00 31.00 Z" fill="#4150b5"/><rect x="72.8" y="15.9" width="12.3" height="1.9" fill="#f0f2fa"/><rect x="72.8" y="20.0" width="12.3" height="1.9" fill="#f0f2fa"/><rect x="72.8" y="24.1" width="12.3" height="1.9" fill="#f0f2fa"/></svg><div class="a " style="left:0px;top:153px;width:1208px;height:40px;background:#ffffff;"></div><div class="a " style="left:9px;top:162px;width:22px;height:22px;background:transparent;border:2px solid #4150b5;border-radius:3px"></div><div class="t " style="left:48.25px;top:167.99px;font-size:13.5px;color:#4150b5;letter-spacing:0.219px;">SO-0032747</div><div class="t " style="left:165px;top:167.99px;font-size:13.5px;color:#1e2b4d;letter-spacing:0.069px;">Spring Valley</div><div class="t " style="left:282.25px;top:167.99px;font-size:13.5px;color:#1e2b4d;letter-spacing:0.38px;">Walk-in</div><div class="t " style="left:517px;top:167.99px;font-size:13.5px;color:#1e2b4d;letter-spacing:0.26px;">$1.05</div><div class="t " style="left:634px;top:157.69px;font-size:13.5px;color:#1e2b4d;letter-spacing:0.634px;">01/24/2023</div><div class="t " style="left:634px;top:176.59px;font-size:13.5px;color:#1e2b4d;letter-spacing:0.18px;">05:57 PM</div><div class="t " style="left:759px;top:157.69px;font-size:13.5px;color:#1e2b4d;letter-spacing:0.634px;">01/24/2023</div><div class="t " style="left:759px;top:176.59px;font-size:13.5px;color:#1e2b4d;letter-spacing:0.18px;">05:57 PM</div><div class="t " style="left:885px;top:167.99px;font-size:13.5px;color:#1e2b4d;letter-spacing:0.277px;">Completed</div><svg style="left:1007.5px;top:163px;" width="16" height="20" viewBox="0 0 16 20"><path d="M2 1 H10 L15 6 V18 Q15 19 14 19 H2 Q1 19 1 18 V2 Q1 1 2 1 Z" fill="none" stroke="#4150b5" stroke-width="2" stroke-linejoin="round"/><path d="M9.5 1 L15 6.5 H9.5 Z" fill="#4150b5"/><path d="M8 9.5 V16.5 M4.5 13 H11.5" stroke="#4150b5" stroke-width="2"/></svg><div class="t " style="left:1047px;top:168.04px;font-size:13.6px;color:#4150b5;letter-spacing:-0.033px;">Return</div><svg style="left:1109px;top:153px;" width="95" height="40" viewBox="0 0 95 40"><path d="M9.20 11.00 L11.02 12.30 L12.85 11.00 L14.68 12.30 L16.50 11.00 L18.32 12.30 L20.15 11.00 L21.98 12.30 L23.80 11.00 L23.80 14.20 L9.20 14.20 Z" fill="#4150b5"/><path d="M10.1 25 V13 M22.9 13 V28.3 Q22.9 29.85 21.3 29.85 H8.6 Q6.8 29.85 6.8 27.8 Q6.8 25.7 8.6 25.7 H18.9 V29.5" fill="none" stroke="#4150b5" stroke-width="1.8" stroke-linejoin="round"/><rect x="12.1" y="16.1" width="5.7" height="1.5" fill="#4150b5"/><rect x="19" y="16.1" width="2" height="1.5" fill="#4150b5"/><rect x="12.1" y="19.3" width="5.7" height="1.5" fill="#4150b5"/><rect x="19" y="19.3" width="2" height="1.5" fill="#4150b5"/><path d="M42 25 V14.3 H44.3 M52.3 14.3 H54.8 V28.3 Q54.8 29.85 53.2 29.85 H40.6 Q38.8 29.85 38.8 27.8 Q38.8 25.7 40.6 25.7 H50.9 V29.5" fill="none" stroke="#4150b5" stroke-width="1.8" stroke-linejoin="round"/><circle cx="45.6" cy="12.6" r="1.7" fill="none" stroke="#4150b5" stroke-width="1.5"/><circle cx="51.1" cy="12.6" r="1.7" fill="none" stroke="#4150b5" stroke-width="1.5"/><path d="M48.35 14.2 L45 18.6 M48.35 14.2 L51.7 18.6" fill="none" stroke="#4150b5" stroke-width="1.6"/><path d="M70.00 11.00 L72.24 12.50 L74.47 11.00 L76.71 12.50 L78.95 11.00 L81.19 12.50 L83.43 11.00 L85.66 12.50 L87.90 11.00 L87.90 31.00 L85.66 29.60 L83.43 31.00 L81.19 29.60 L78.95 31.00 L76.71 29.60 L74.47 31.00 L72.24 29.60 L70.00 31.00 Z" fill="#4150b5"/><rect x="72.8" y="15.9" width="12.3" height="1.9" fill="#ffffff"/><rect x="72.8" y="20.0" width="12.3" height="1.9" fill="#ffffff"/><rect x="72.8" y="24.1" width="12.3" height="1.9" fill="#ffffff"/></svg><div class="a " style="left:0px;top:193px;width:1208px;height:40px;background:#f0f2fa;"></div><div class="a " style="left:9px;top:202px;width:22px;height:22px;background:transparent;border:2px solid #4150b5;border-radius:3px"></div><div class="t " style="left:48.25px;top:207.99px;font-size:13.5px;color:#4150b5;letter-spacing:0.219px;">SO-0032744</div><div class="t " style="left:165px;top:207.99px;font-size:13.5px;color:#1e2b4d;letter-spacing:0.069px;">Spring Valley</div><div class="t " style="left:282.25px;top:207.99px;font-size:13.5px;color:#1e2b4d;letter-spacing:0.38px;">Walk-in</div><div class="t " style="left:517px;top:207.99px;font-size:13.5px;color:#1e2b4d;letter-spacing:0.26px;">$1.05</div><div class="t " style="left:634px;top:197.69px;font-size:13.5px;color:#1e2b4d;letter-spacing:0.634px;">01/24/2023</div><div class="t " style="left:634px;top:216.59px;font-size:13.5px;color:#1e2b4d;letter-spacing:0.18px;">05:57 PM</div><div class="t " style="left:759px;top:197.69px;font-size:13.5px;color:#1e2b4d;letter-spacing:0.634px;">01/24/2023</div><div class="t " style="left:759px;top:216.59px;font-size:13.5px;color:#1e2b4d;letter-spacing:0.18px;">05:57 PM</div><div class="t " style="left:885px;top:207.99px;font-size:13.5px;color:#1e2b4d;letter-spacing:0.277px;">Completed</div><svg style="left:1007.5px;top:203px;" width="16" height="20" viewBox="0 0 16 20"><path d="M2 1 H10 L15 6 V18 Q15 19 14 19 H2 Q1 19 1 18 V2 Q1 1 2 1 Z" fill="none" stroke="#4150b5" stroke-width="2" stroke-linejoin="round"/><path d="M9.5 1 L15 6.5 H9.5 Z" fill="#4150b5"/><path d="M8 9.5 V16.5 M4.5 13 H11.5" stroke="#4150b5" stroke-width="2"/></svg><div class="t " style="left:1047px;top:208.04px;font-size:13.6px;color:#4150b5;letter-spacing:-0.033px;">Return</div><svg style="left:1109px;top:193px;" width="95" height="40" viewBox="0 0 95 40"><path d="M9.20 11.00 L11.02 12.30 L12.85 11.00 L14.68 12.30 L16.50 11.00 L18.32 12.30 L20.15 11.00 L21.98 12.30 L23.80 11.00 L23.80 14.20 L9.20 14.20 Z" fill="#4150b5"/><path d="M10.1 25 V13 M22.9 13 V28.3 Q22.9 29.85 21.3 29.85 H8.6 Q6.8 29.85 6.8 27.8 Q6.8 25.7 8.6 25.7 H18.9 V29.5" fill="none" stroke="#4150b5" stroke-width="1.8" stroke-linejoin="round"/><rect x="12.1" y="16.1" width="5.7" height="1.5" fill="#4150b5"/><rect x="19" y="16.1" width="2" height="1.5" fill="#4150b5"/><rect x="12.1" y="19.3" width="5.7" height="1.5" fill="#4150b5"/><rect x="19" y="19.3" width="2" height="1.5" fill="#4150b5"/><path d="M42 25 V14.3 H44.3 M52.3 14.3 H54.8 V28.3 Q54.8 29.85 53.2 29.85 H40.6 Q38.8 29.85 38.8 27.8 Q38.8 25.7 40.6 25.7 H50.9 V29.5" fill="none" stroke="#4150b5" stroke-width="1.8" stroke-linejoin="round"/><circle cx="45.6" cy="12.6" r="1.7" fill="none" stroke="#4150b5" stroke-width="1.5"/><circle cx="51.1" cy="12.6" r="1.7" fill="none" stroke="#4150b5" stroke-width="1.5"/><path d="M48.35 14.2 L45 18.6 M48.35 14.2 L51.7 18.6" fill="none" stroke="#4150b5" stroke-width="1.6"/><path d="M70.00 11.00 L72.24 12.50 L74.47 11.00 L76.71 12.50 L78.95 11.00 L81.19 12.50 L83.43 11.00 L85.66 12.50 L87.90 11.00 L87.90 31.00 L85.66 29.60 L83.43 31.00 L81.19 29.60 L78.95 31.00 L76.71 29.60 L74.47 31.00 L72.24 29.60 L70.00 31.00 Z" fill="#4150b5"/><rect x="72.8" y="15.9" width="12.3" height="1.9" fill="#f0f2fa"/><rect x="72.8" y="20.0" width="12.3" height="1.9" fill="#f0f2fa"/><rect x="72.8" y="24.1" width="12.3" height="1.9" fill="#f0f2fa"/></svg><div class="a " style="left:0px;top:233px;width:1208px;height:40px;background:#ffffff;"></div><div class="a " style="left:9px;top:242px;width:22px;height:22px;background:transparent;border:2px solid #4150b5;border-radius:3px"></div><div class="t " style="left:48.25px;top:247.99px;font-size:13.5px;color:#4150b5;letter-spacing:0.219px;">SO-0032739</div><div class="t " style="left:165px;top:247.99px;font-size:13.5px;color:#1e2b4d;letter-spacing:0.069px;">Spring Valley</div><div class="t " style="left:282.25px;top:247.99px;font-size:13.5px;color:#1e2b4d;letter-spacing:0.38px;">Walk-in</div><div class="t " style="left:517px;top:247.99px;font-size:13.5px;color:#1e2b4d;letter-spacing:0.26px;">$1.05</div><div class="t " style="left:634px;top:237.69px;font-size:13.5px;color:#1e2b4d;letter-spacing:0.634px;">01/24/2023</div><div class="t " style="left:634px;top:256.59px;font-size:13.5px;color:#1e2b4d;letter-spacing:0.18px;">05:57 PM</div><div class="t " style="left:759px;top:237.69px;font-size:13.5px;color:#1e2b4d;letter-spacing:0.634px;">01/24/2023</div><div class="t " style="left:759px;top:256.59px;font-size:13.5px;color:#1e2b4d;letter-spacing:0.18px;">05:57 PM</div><div class="t " style="left:885px;top:247.99px;font-size:13.5px;color:#1e2b4d;letter-spacing:0.277px;">Completed</div><svg style="left:1007.5px;top:243px;" width="16" height="20" viewBox="0 0 16 20"><path d="M2 1 H10 L15 6 V18 Q15 19 14 19 H2 Q1 19 1 18 V2 Q1 1 2 1 Z" fill="none" stroke="#4150b5" stroke-width="2" stroke-linejoin="round"/><path d="M9.5 1 L15 6.5 H9.5 Z" fill="#4150b5"/><path d="M8 9.5 V16.5 M4.5 13 H11.5" stroke="#4150b5" stroke-width="2"/></svg><div class="t " style="left:1047px;top:248.04px;font-size:13.6px;color:#4150b5;letter-spacing:-0.033px;">Return</div><svg style="left:1109px;top:233px;" width="95" height="40" viewBox="0 0 95 40"><path d="M9.20 11.00 L11.02 12.30 L12.85 11.00 L14.68 12.30 L16.50 11.00 L18.32 12.30 L20.15 11.00 L21.98 12.30 L23.80 11.00 L23.80 14.20 L9.20 14.20 Z" fill="#4150b5"/><path d="M10.1 25 V13 M22.9 13 V28.3 Q22.9 29.85 21.3 29.85 H8.6 Q6.8 29.85 6.8 27.8 Q6.8 25.7 8.6 25.7 H18.9 V29.5" fill="none" stroke="#4150b5" stroke-width="1.8" stroke-linejoin="round"/><rect x="12.1" y="16.1" width="5.7" height="1.5" fill="#4150b5"/><rect x="19" y="16.1" width="2" height="1.5" fill="#4150b5"/><rect x="12.1" y="19.3" width="5.7" height="1.5" fill="#4150b5"/><rect x="19" y="19.3" width="2" height="1.5" fill="#4150b5"/><path d="M42 25 V14.3 H44.3 M52.3 14.3 H54.8 V28.3 Q54.8 29.85 53.2 29.85 H40.6 Q38.8 29.85 38.8 27.8 Q38.8 25.7 40.6 25.7 H50.9 V29.5" fill="none" stroke="#4150b5" stroke-width="1.8" stroke-linejoin="round"/><circle cx="45.6" cy="12.6" r="1.7" fill="none" stroke="#4150b5" stroke-width="1.5"/><circle cx="51.1" cy="12.6" r="1.7" fill="none" stroke="#4150b5" stroke-width="1.5"/><path d="M48.35 14.2 L45 18.6 M48.35 14.2 L51.7 18.6" fill="none" stroke="#4150b5" stroke-width="1.6"/><path d="M70.00 11.00 L72.24 12.50 L74.47 11.00 L76.71 12.50 L78.95 11.00 L81.19 12.50 L83.43 11.00 L85.66 12.50 L87.90 11.00 L87.90 31.00 L85.66 29.60 L83.43 31.00 L81.19 29.60 L78.95 31.00 L76.71 29.60 L74.47 31.00 L72.24 29.60 L70.00 31.00 Z" fill="#4150b5"/><rect x="72.8" y="15.9" width="12.3" height="1.9" fill="#ffffff"/><rect x="72.8" y="20.0" width="12.3" height="1.9" fill="#ffffff"/><rect x="72.8" y="24.1" width="12.3" height="1.9" fill="#ffffff"/></svg><div class="a " style="left:0px;top:273px;width:1208px;height:40px;background:#f0f2fa;"></div><div class="a " style="left:9px;top:282px;width:22px;height:22px;background:transparent;border:2px solid #4150b5;border-radius:3px"></div><div class="t " style="left:48.25px;top:287.99px;font-size:13.5px;color:#4150b5;letter-spacing:0.219px;">SO-0032738</div><div class="t " style="left:165px;top:287.99px;font-size:13.5px;color:#1e2b4d;letter-spacing:0.069px;">Spring Valley</div><div class="t " style="left:282.25px;top:287.99px;font-size:13.5px;color:#1e2b4d;letter-spacing:0.38px;">Walk-in</div><div class="t " style="left:517px;top:287.99px;font-size:13.5px;color:#1e2b4d;letter-spacing:0.26px;">$1.05</div><div class="t " style="left:634px;top:277.69px;font-size:13.5px;color:#1e2b4d;letter-spacing:0.634px;">01/24/2023</div><div class="t " style="left:634px;top:296.59px;font-size:13.5px;color:#1e2b4d;letter-spacing:0.18px;">05:57 PM</div><div class="t " style="left:759px;top:277.69px;font-size:13.5px;color:#1e2b4d;letter-spacing:0.634px;">01/24/2023</div><div class="t " style="left:759px;top:296.59px;font-size:13.5px;color:#1e2b4d;letter-spacing:0.18px;">05:57 PM</div><div class="t " style="left:885px;top:287.99px;font-size:13.5px;color:#1e2b4d;letter-spacing:0.277px;">Completed</div><svg style="left:1007.5px;top:283px;" width="16" height="20" viewBox="0 0 16 20"><path d="M2 1 H10 L15 6 V18 Q15 19 14 19 H2 Q1 19 1 18 V2 Q1 1 2 1 Z" fill="none" stroke="#4150b5" stroke-width="2" stroke-linejoin="round"/><path d="M9.5 1 L15 6.5 H9.5 Z" fill="#4150b5"/><path d="M8 9.5 V16.5 M4.5 13 H11.5" stroke="#4150b5" stroke-width="2"/></svg><div class="t " style="left:1047px;top:288.04px;font-size:13.6px;color:#4150b5;letter-spacing:-0.033px;">Return</div><svg style="left:1109px;top:273px;" width="95" height="40" viewBox="0 0 95 40"><path d="M9.20 11.00 L11.02 12.30 L12.85 11.00 L14.68 12.30 L16.50 11.00 L18.32 12.30 L20.15 11.00 L21.98 12.30 L23.80 11.00 L23.80 14.20 L9.20 14.20 Z" fill="#4150b5"/><path d="M10.1 25 V13 M22.9 13 V28.3 Q22.9 29.85 21.3 29.85 H8.6 Q6.8 29.85 6.8 27.8 Q6.8 25.7 8.6 25.7 H18.9 V29.5" fill="none" stroke="#4150b5" stroke-width="1.8" stroke-linejoin="round"/><rect x="12.1" y="16.1" width="5.7" height="1.5" fill="#4150b5"/><rect x="19" y="16.1" width="2" height="1.5" fill="#4150b5"/><rect x="12.1" y="19.3" width="5.7" height="1.5" fill="#4150b5"/><rect x="19" y="19.3" width="2" height="1.5" fill="#4150b5"/><path d="M42 25 V14.3 H44.3 M52.3 14.3 H54.8 V28.3 Q54.8 29.85 53.2 29.85 H40.6 Q38.8 29.85 38.8 27.8 Q38.8 25.7 40.6 25.7 H50.9 V29.5" fill="none" stroke="#4150b5" stroke-width="1.8" stroke-linejoin="round"/><circle cx="45.6" cy="12.6" r="1.7" fill="none" stroke="#4150b5" stroke-width="1.5"/><circle cx="51.1" cy="12.6" r="1.7" fill="none" stroke="#4150b5" stroke-width="1.5"/><path d="M48.35 14.2 L45 18.6 M48.35 14.2 L51.7 18.6" fill="none" stroke="#4150b5" stroke-width="1.6"/><path d="M70.00 11.00 L72.24 12.50 L74.47 11.00 L76.71 12.50 L78.95 11.00 L81.19 12.50 L83.43 11.00 L85.66 12.50 L87.90 11.00 L87.90 31.00 L85.66 29.60 L83.43 31.00 L81.19 29.60 L78.95 31.00 L76.71 29.60 L74.47 31.00 L72.24 29.60 L70.00 31.00 Z" fill="#4150b5"/><rect x="72.8" y="15.9" width="12.3" height="1.9" fill="#f0f2fa"/><rect x="72.8" y="20.0" width="12.3" height="1.9" fill="#f0f2fa"/><rect x="72.8" y="24.1" width="12.3" height="1.9" fill="#f0f2fa"/></svg><div class="a " style="left:0px;top:313px;width:1208px;height:40px;background:#ffffff;"></div><div class="a " style="left:9px;top:322px;width:22px;height:22px;background:transparent;border:2px solid #4150b5;border-radius:3px"></div><div class="t " style="left:48.25px;top:327.99px;font-size:13.5px;color:#4150b5;letter-spacing:0.219px;">SO-0032737</div><div class="t " style="left:165px;top:327.99px;font-size:13.5px;color:#1e2b4d;letter-spacing:0.069px;">Spring Valley</div><div class="t " style="left:282.25px;top:327.99px;font-size:13.5px;color:#1e2b4d;letter-spacing:0.38px;">Walk-in</div><div class="t " style="left:517px;top:327.99px;font-size:13.5px;color:#1e2b4d;letter-spacing:0.26px;">$1.05</div><div class="t " style="left:634px;top:317.69px;font-size:13.5px;color:#1e2b4d;letter-spacing:0.634px;">01/24/2023</div><div class="t " style="left:634px;top:336.59px;font-size:13.5px;color:#1e2b4d;letter-spacing:0.18px;">05:57 PM</div><div class="t " style="left:759px;top:317.69px;font-size:13.5px;color:#1e2b4d;letter-spacing:0.634px;">01/24/2023</div><div class="t " style="left:759px;top:336.59px;font-size:13.5px;color:#1e2b4d;letter-spacing:0.18px;">05:57 PM</div><div class="t " style="left:885px;top:327.99px;font-size:13.5px;color:#1e2b4d;letter-spacing:0.277px;">Completed</div><svg style="left:1007.5px;top:323px;" width="16" height="20" viewBox="0 0 16 20"><path d="M2 1 H10 L15 6 V18 Q15 19 14 19 H2 Q1 19 1 18 V2 Q1 1 2 1 Z" fill="none" stroke="#4150b5" stroke-width="2" stroke-linejoin="round"/><path d="M9.5 1 L15 6.5 H9.5 Z" fill="#4150b5"/><path d="M8 9.5 V16.5 M4.5 13 H11.5" stroke="#4150b5" stroke-width="2"/></svg><div class="t " style="left:1047px;top:328.04px;font-size:13.6px;color:#4150b5;letter-spacing:-0.033px;">Return</div><svg style="left:1109px;top:313px;" width="95" height="40" viewBox="0 0 95 40"><path d="M9.20 11.00 L11.02 12.30 L12.85 11.00 L14.68 12.30 L16.50 11.00 L18.32 12.30 L20.15 11.00 L21.98 12.30 L23.80 11.00 L23.80 14.20 L9.20 14.20 Z" fill="#4150b5"/><path d="M10.1 25 V13 M22.9 13 V28.3 Q22.9 29.85 21.3 29.85 H8.6 Q6.8 29.85 6.8 27.8 Q6.8 25.7 8.6 25.7 H18.9 V29.5" fill="none" stroke="#4150b5" stroke-width="1.8" stroke-linejoin="round"/><rect x="12.1" y="16.1" width="5.7" height="1.5" fill="#4150b5"/><rect x="19" y="16.1" width="2" height="1.5" fill="#4150b5"/><rect x="12.1" y="19.3" width="5.7" height="1.5" fill="#4150b5"/><rect x="19" y="19.3" width="2" height="1.5" fill="#4150b5"/><path d="M42 25 V14.3 H44.3 M52.3 14.3 H54.8 V28.3 Q54.8 29.85 53.2 29.85 H40.6 Q38.8 29.85 38.8 27.8 Q38.8 25.7 40.6 25.7 H50.9 V29.5" fill="none" stroke="#4150b5" stroke-width="1.8" stroke-linejoin="round"/><circle cx="45.6" cy="12.6" r="1.7" fill="none" stroke="#4150b5" stroke-width="1.5"/><circle cx="51.1" cy="12.6" r="1.7" fill="none" stroke="#4150b5" stroke-width="1.5"/><path d="M48.35 14.2 L45 18.6 M48.35 14.2 L51.7 18.6" fill="none" stroke="#4150b5" stroke-width="1.6"/><path d="M70.00 11.00 L72.24 12.50 L74.47 11.00 L76.71 12.50 L78.95 11.00 L81.19 12.50 L83.43 11.00 L85.66 12.50 L87.90 11.00 L87.90 31.00 L85.66 29.60 L83.43 31.00 L81.19 29.60 L78.95 31.00 L76.71 29.60 L74.47 31.00 L72.24 29.60 L70.00 31.00 Z" fill="#4150b5"/><rect x="72.8" y="15.9" width="12.3" height="1.9" fill="#ffffff"/><rect x="72.8" y="20.0" width="12.3" height="1.9" fill="#ffffff"/><rect x="72.8" y="24.1" width="12.3" height="1.9" fill="#ffffff"/></svg><div class="a " style="left:0px;top:353px;width:1208px;height:40px;background:#f0f2fa;"></div><div class="a " style="left:9px;top:362px;width:22px;height:22px;background:transparent;border:2px solid #4150b5;border-radius:3px"></div><div class="t " style="left:48.25px;top:367.99px;font-size:13.5px;color:#4150b5;letter-spacing:0.219px;">SO-0032736</div><div class="t " style="left:165px;top:367.99px;font-size:13.5px;color:#1e2b4d;letter-spacing:0.069px;">Spring Valley</div><div class="t " style="left:282.25px;top:367.99px;font-size:13.5px;color:#1e2b4d;letter-spacing:0.38px;">Walk-in</div><div class="t " style="left:517px;top:367.99px;font-size:13.5px;color:#1e2b4d;letter-spacing:0.26px;">$1.05</div><div class="t " style="left:634px;top:357.69px;font-size:13.5px;color:#1e2b4d;letter-spacing:0.634px;">01/24/2023</div><div class="t " style="left:634px;top:376.59px;font-size:13.5px;color:#1e2b4d;letter-spacing:0.18px;">05:57 PM</div><div class="t " style="left:759px;top:357.69px;font-size:13.5px;color:#1e2b4d;letter-spacing:0.634px;">01/24/2023</div><div class="t " style="left:759px;top:376.59px;font-size:13.5px;color:#1e2b4d;letter-spacing:0.18px;">05:57 PM</div><div class="t " style="left:885px;top:367.99px;font-size:13.5px;color:#1e2b4d;letter-spacing:0.277px;">Completed</div><svg style="left:1007.5px;top:363px;" width="16" height="20" viewBox="0 0 16 20"><path d="M2 1 H10 L15 6 V18 Q15 19 14 19 H2 Q1 19 1 18 V2 Q1 1 2 1 Z" fill="none" stroke="#4150b5" stroke-width="2" stroke-linejoin="round"/><path d="M9.5 1 L15 6.5 H9.5 Z" fill="#4150b5"/><path d="M8 9.5 V16.5 M4.5 13 H11.5" stroke="#4150b5" stroke-width="2"/></svg><div class="t " style="left:1047px;top:368.04px;font-size:13.6px;color:#4150b5;letter-spacing:-0.033px;">Return</div><svg style="left:1109px;top:353px;" width="95" height="40" viewBox="0 0 95 40"><path d="M9.20 11.00 L11.02 12.30 L12.85 11.00 L14.68 12.30 L16.50 11.00 L18.32 12.30 L20.15 11.00 L21.98 12.30 L23.80 11.00 L23.80 14.20 L9.20 14.20 Z" fill="#4150b5"/><path d="M10.1 25 V13 M22.9 13 V28.3 Q22.9 29.85 21.3 29.85 H8.6 Q6.8 29.85 6.8 27.8 Q6.8 25.7 8.6 25.7 H18.9 V29.5" fill="none" stroke="#4150b5" stroke-width="1.8" stroke-linejoin="round"/><rect x="12.1" y="16.1" width="5.7" height="1.5" fill="#4150b5"/><rect x="19" y="16.1" width="2" height="1.5" fill="#4150b5"/><rect x="12.1" y="19.3" width="5.7" height="1.5" fill="#4150b5"/><rect x="19" y="19.3" width="2" height="1.5" fill="#4150b5"/><path d="M42 25 V14.3 H44.3 M52.3 14.3 H54.8 V28.3 Q54.8 29.85 53.2 29.85 H40.6 Q38.8 29.85 38.8 27.8 Q38.8 25.7 40.6 25.7 H50.9 V29.5" fill="none" stroke="#4150b5" stroke-width="1.8" stroke-linejoin="round"/><circle cx="45.6" cy="12.6" r="1.7" fill="none" stroke="#4150b5" stroke-width="1.5"/><circle cx="51.1" cy="12.6" r="1.7" fill="none" stroke="#4150b5" stroke-width="1.5"/><path d="M48.35 14.2 L45 18.6 M48.35 14.2 L51.7 18.6" fill="none" stroke="#4150b5" stroke-width="1.6"/><path d="M70.00 11.00 L72.24 12.50 L74.47 11.00 L76.71 12.50 L78.95 11.00 L81.19 12.50 L83.43 11.00 L85.66 12.50 L87.90 11.00 L87.90 31.00 L85.66 29.60 L83.43 31.00 L81.19 29.60 L78.95 31.00 L76.71 29.60 L74.47 31.00 L72.24 29.60 L70.00 31.00 Z" fill="#4150b5"/><rect x="72.8" y="15.9" width="12.3" height="1.9" fill="#f0f2fa"/><rect x="72.8" y="20.0" width="12.3" height="1.9" fill="#f0f2fa"/><rect x="72.8" y="24.1" width="12.3" height="1.9" fill="#f0f2fa"/></svg><div class="a " style="left:0px;top:393px;width:1208px;height:40px;background:#ffffff;"></div><div class="a " style="left:9px;top:402px;width:22px;height:22px;background:transparent;border:2px solid #4150b5;border-radius:3px"></div><div class="t " style="left:48.25px;top:407.99px;font-size:13.5px;color:#4150b5;letter-spacing:0.219px;">SO-0032735</div><div class="t " style="left:165px;top:407.99px;font-size:13.5px;color:#1e2b4d;letter-spacing:0.069px;">Spring Valley</div><div class="t " style="left:282.25px;top:407.99px;font-size:13.5px;color:#1e2b4d;letter-spacing:0.38px;">Walk-in</div><div class="t " style="left:517px;top:407.99px;font-size:13.5px;color:#1e2b4d;letter-spacing:0.26px;">$1.05</div><div class="t " style="left:634px;top:397.69px;font-size:13.5px;color:#1e2b4d;letter-spacing:0.634px;">01/24/2023</div><div class="t " style="left:634px;top:416.59px;font-size:13.5px;color:#1e2b4d;letter-spacing:0.18px;">05:57 PM</div><div class="t " style="left:759px;top:397.69px;font-size:13.5px;color:#1e2b4d;letter-spacing:0.634px;">01/24/2023</div><div class="t " style="left:759px;top:416.59px;font-size:13.5px;color:#1e2b4d;letter-spacing:0.18px;">05:57 PM</div><div class="t " style="left:885px;top:407.99px;font-size:13.5px;color:#1e2b4d;letter-spacing:0.277px;">Completed</div><svg style="left:1007.5px;top:403px;" width="16" height="20" viewBox="0 0 16 20"><path d="M2 1 H10 L15 6 V18 Q15 19 14 19 H2 Q1 19 1 18 V2 Q1 1 2 1 Z" fill="none" stroke="#4150b5" stroke-width="2" stroke-linejoin="round"/><path d="M9.5 1 L15 6.5 H9.5 Z" fill="#4150b5"/><path d="M8 9.5 V16.5 M4.5 13 H11.5" stroke="#4150b5" stroke-width="2"/></svg><div class="t " style="left:1047px;top:408.04px;font-size:13.6px;color:#4150b5;letter-spacing:-0.033px;">Return</div><svg style="left:1109px;top:393px;" width="95" height="40" viewBox="0 0 95 40"><path d="M9.20 11.00 L11.02 12.30 L12.85 11.00 L14.68 12.30 L16.50 11.00 L18.32 12.30 L20.15 11.00 L21.98 12.30 L23.80 11.00 L23.80 14.20 L9.20 14.20 Z" fill="#4150b5"/><path d="M10.1 25 V13 M22.9 13 V28.3 Q22.9 29.85 21.3 29.85 H8.6 Q6.8 29.85 6.8 27.8 Q6.8 25.7 8.6 25.7 H18.9 V29.5" fill="none" stroke="#4150b5" stroke-width="1.8" stroke-linejoin="round"/><rect x="12.1" y="16.1" width="5.7" height="1.5" fill="#4150b5"/><rect x="19" y="16.1" width="2" height="1.5" fill="#4150b5"/><rect x="12.1" y="19.3" width="5.7" height="1.5" fill="#4150b5"/><rect x="19" y="19.3" width="2" height="1.5" fill="#4150b5"/><path d="M42 25 V14.3 H44.3 M52.3 14.3 H54.8 V28.3 Q54.8 29.85 53.2 29.85 H40.6 Q38.8 29.85 38.8 27.8 Q38.8 25.7 40.6 25.7 H50.9 V29.5" fill="none" stroke="#4150b5" stroke-width="1.8" stroke-linejoin="round"/><circle cx="45.6" cy="12.6" r="1.7" fill="none" stroke="#4150b5" stroke-width="1.5"/><circle cx="51.1" cy="12.6" r="1.7" fill="none" stroke="#4150b5" stroke-width="1.5"/><path d="M48.35 14.2 L45 18.6 M48.35 14.2 L51.7 18.6" fill="none" stroke="#4150b5" stroke-width="1.6"/><path d="M70.00 11.00 L72.24 12.50 L74.47 11.00 L76.71 12.50 L78.95 11.00 L81.19 12.50 L83.43 11.00 L85.66 12.50 L87.90 11.00 L87.90 31.00 L85.66 29.60 L83.43 31.00 L81.19 29.60 L78.95 31.00 L76.71 29.60 L74.47 31.00 L72.24 29.60 L70.00 31.00 Z" fill="#4150b5"/><rect x="72.8" y="15.9" width="12.3" height="1.9" fill="#ffffff"/><rect x="72.8" y="20.0" width="12.3" height="1.9" fill="#ffffff"/><rect x="72.8" y="24.1" width="12.3" height="1.9" fill="#ffffff"/></svg><div class="a " style="left:0px;top:433px;width:1208px;height:40px;background:#f0f2fa;"></div><div class="a " style="left:9px;top:442px;width:22px;height:22px;background:transparent;border:2px solid #4150b5;border-radius:3px"></div><div class="t " style="left:48.25px;top:447.99px;font-size:13.5px;color:#4150b5;letter-spacing:0.219px;">SO-0032734</div><div class="t " style="left:165px;top:447.99px;font-size:13.5px;color:#1e2b4d;letter-spacing:0.069px;">Spring Valley</div><div class="t " style="left:282.25px;top:447.99px;font-size:13.5px;color:#1e2b4d;letter-spacing:0.38px;">Walk-in</div><div class="t " style="left:517px;top:447.99px;font-size:13.5px;color:#1e2b4d;letter-spacing:0.26px;">$1.05</div><div class="t " style="left:634px;top:437.69px;font-size:13.5px;color:#1e2b4d;letter-spacing:0.634px;">01/24/2023</div><div class="t " style="left:634px;top:456.59px;font-size:13.5px;color:#1e2b4d;letter-spacing:0.18px;">05:57 PM</div><div class="t " style="left:759px;top:437.69px;font-size:13.5px;color:#1e2b4d;letter-spacing:0.634px;">01/24/2023</div><div class="t " style="left:759px;top:456.59px;font-size:13.5px;color:#1e2b4d;letter-spacing:0.18px;">05:57 PM</div><div class="t " style="left:885px;top:447.99px;font-size:13.5px;color:#1e2b4d;letter-spacing:0.277px;">Completed</div><svg style="left:1007.5px;top:443px;" width="16" height="20" viewBox="0 0 16 20"><path d="M2 1 H10 L15 6 V18 Q15 19 14 19 H2 Q1 19 1 18 V2 Q1 1 2 1 Z" fill="none" stroke="#4150b5" stroke-width="2" stroke-linejoin="round"/><path d="M9.5 1 L15 6.5 H9.5 Z" fill="#4150b5"/><path d="M8 9.5 V16.5 M4.5 13 H11.5" stroke="#4150b5" stroke-width="2"/></svg><div class="t " style="left:1047px;top:448.04px;font-size:13.6px;color:#4150b5;letter-spacing:-0.033px;">Return</div><svg style="left:1109px;top:433px;" width="95" height="40" viewBox="0 0 95 40"><path d="M9.20 11.00 L11.02 12.30 L12.85 11.00 L14.68 12.30 L16.50 11.00 L18.32 12.30 L20.15 11.00 L21.98 12.30 L23.80 11.00 L23.80 14.20 L9.20 14.20 Z" fill="#4150b5"/><path d="M10.1 25 V13 M22.9 13 V28.3 Q22.9 29.85 21.3 29.85 H8.6 Q6.8 29.85 6.8 27.8 Q6.8 25.7 8.6 25.7 H18.9 V29.5" fill="none" stroke="#4150b5" stroke-width="1.8" stroke-linejoin="round"/><rect x="12.1" y="16.1" width="5.7" height="1.5" fill="#4150b5"/><rect x="19" y="16.1" width="2" height="1.5" fill="#4150b5"/><rect x="12.1" y="19.3" width="5.7" height="1.5" fill="#4150b5"/><rect x="19" y="19.3" width="2" height="1.5" fill="#4150b5"/><path d="M42 25 V14.3 H44.3 M52.3 14.3 H54.8 V28.3 Q54.8 29.85 53.2 29.85 H40.6 Q38.8 29.85 38.8 27.8 Q38.8 25.7 40.6 25.7 H50.9 V29.5" fill="none" stroke="#4150b5" stroke-width="1.8" stroke-linejoin="round"/><circle cx="45.6" cy="12.6" r="1.7" fill="none" stroke="#4150b5" stroke-width="1.5"/><circle cx="51.1" cy="12.6" r="1.7" fill="none" stroke="#4150b5" stroke-width="1.5"/><path d="M48.35 14.2 L45 18.6 M48.35 14.2 L51.7 18.6" fill="none" stroke="#4150b5" stroke-width="1.6"/><path d="M70.00 11.00 L72.24 12.50 L74.47 11.00 L76.71 12.50 L78.95 11.00 L81.19 12.50 L83.43 11.00 L85.66 12.50 L87.90 11.00 L87.90 31.00 L85.66 29.60 L83.43 31.00 L81.19 29.60 L78.95 31.00 L76.71 29.60 L74.47 31.00 L72.24 29.60 L70.00 31.00 Z" fill="#4150b5"/><rect x="72.8" y="15.9" width="12.3" height="1.9" fill="#f0f2fa"/><rect x="72.8" y="20.0" width="12.3" height="1.9" fill="#f0f2fa"/><rect x="72.8" y="24.1" width="12.3" height="1.9" fill="#f0f2fa"/></svg><div class="a " style="left:0px;top:473px;width:1208px;height:40px;background:#ffffff;"></div><div class="a " style="left:9px;top:482px;width:22px;height:22px;background:transparent;border:2px solid #4150b5;border-radius:3px"></div><div class="t " style="left:48.25px;top:487.99px;font-size:13.5px;color:#4150b5;letter-spacing:0.219px;">SO-0032731</div><div class="t " style="left:165px;top:487.99px;font-size:13.5px;color:#1e2b4d;letter-spacing:0.069px;">Spring Valley</div><div class="t " style="left:282.25px;top:487.99px;font-size:13.5px;color:#1e2b4d;letter-spacing:0.38px;">Walk-in</div><div class="t " style="left:517px;top:487.99px;font-size:13.5px;color:#1e2b4d;letter-spacing:0.26px;">$1.05</div><div class="t " style="left:634px;top:477.69px;font-size:13.5px;color:#1e2b4d;letter-spacing:0.634px;">01/24/2023</div><div class="t " style="left:634px;top:496.59px;font-size:13.5px;color:#1e2b4d;letter-spacing:0.18px;">05:57 PM</div><div class="t " style="left:759px;top:477.69px;font-size:13.5px;color:#1e2b4d;letter-spacing:0.634px;">01/24/2023</div><div class="t " style="left:759px;top:496.59px;font-size:13.5px;color:#1e2b4d;letter-spacing:0.18px;">05:57 PM</div><div class="t " style="left:885px;top:487.99px;font-size:13.5px;color:#1e2b4d;letter-spacing:0.277px;">Completed</div><svg style="left:1007.5px;top:483px;" width="16" height="20" viewBox="0 0 16 20"><path d="M2 1 H10 L15 6 V18 Q15 19 14 19 H2 Q1 19 1 18 V2 Q1 1 2 1 Z" fill="none" stroke="#4150b5" stroke-width="2" stroke-linejoin="round"/><path d="M9.5 1 L15 6.5 H9.5 Z" fill="#4150b5"/><path d="M8 9.5 V16.5 M4.5 13 H11.5" stroke="#4150b5" stroke-width="2"/></svg><div class="t " style="left:1047px;top:488.04px;font-size:13.6px;color:#4150b5;letter-spacing:-0.033px;">Return</div><svg style="left:1109px;top:473px;" width="95" height="40" viewBox="0 0 95 40"><path d="M9.20 11.00 L11.02 12.30 L12.85 11.00 L14.68 12.30 L16.50 11.00 L18.32 12.30 L20.15 11.00 L21.98 12.30 L23.80 11.00 L23.80 14.20 L9.20 14.20 Z" fill="#4150b5"/><path d="M10.1 25 V13 M22.9 13 V28.3 Q22.9 29.85 21.3 29.85 H8.6 Q6.8 29.85 6.8 27.8 Q6.8 25.7 8.6 25.7 H18.9 V29.5" fill="none" stroke="#4150b5" stroke-width="1.8" stroke-linejoin="round"/><rect x="12.1" y="16.1" width="5.7" height="1.5" fill="#4150b5"/><rect x="19" y="16.1" width="2" height="1.5" fill="#4150b5"/><rect x="12.1" y="19.3" width="5.7" height="1.5" fill="#4150b5"/><rect x="19" y="19.3" width="2" height="1.5" fill="#4150b5"/><path d="M42 25 V14.3 H44.3 M52.3 14.3 H54.8 V28.3 Q54.8 29.85 53.2 29.85 H40.6 Q38.8 29.85 38.8 27.8 Q38.8 25.7 40.6 25.7 H50.9 V29.5" fill="none" stroke="#4150b5" stroke-width="1.8" stroke-linejoin="round"/><circle cx="45.6" cy="12.6" r="1.7" fill="none" stroke="#4150b5" stroke-width="1.5"/><circle cx="51.1" cy="12.6" r="1.7" fill="none" stroke="#4150b5" stroke-width="1.5"/><path d="M48.35 14.2 L45 18.6 M48.35 14.2 L51.7 18.6" fill="none" stroke="#4150b5" stroke-width="1.6"/><path d="M70.00 11.00 L72.24 12.50 L74.47 11.00 L76.71 12.50 L78.95 11.00 L81.19 12.50 L83.43 11.00 L85.66 12.50 L87.90 11.00 L87.90 31.00 L85.66 29.60 L83.43 31.00 L81.19 29.60 L78.95 31.00 L76.71 29.60 L74.47 31.00 L72.24 29.60 L70.00 31.00 Z" fill="#4150b5"/><rect x="72.8" y="15.9" width="12.3" height="1.9" fill="#ffffff"/><rect x="72.8" y="20.0" width="12.3" height="1.9" fill="#ffffff"/><rect x="72.8" y="24.1" width="12.3" height="1.9" fill="#ffffff"/></svg><div class="a " style="left:0px;top:513px;width:1208px;height:40px;background:#f0f2fa;"></div><div class="a " style="left:9px;top:522px;width:22px;height:22px;background:transparent;border:2px solid #4150b5;border-radius:3px"></div><div class="t " style="left:48.25px;top:527.99px;font-size:13.5px;color:#4150b5;letter-spacing:0.219px;">SO-0032729</div><div class="t " style="left:165px;top:527.99px;font-size:13.5px;color:#1e2b4d;letter-spacing:0.069px;">Spring Valley</div><div class="t " style="left:282.25px;top:527.99px;font-size:13.5px;color:#1e2b4d;letter-spacing:0.38px;">Walk-in</div><div class="t " style="left:517px;top:527.99px;font-size:13.5px;color:#1e2b4d;letter-spacing:0.26px;">$1.05</div><div class="t " style="left:634px;top:517.69px;font-size:13.5px;color:#1e2b4d;letter-spacing:0.634px;">01/24/2023</div><div class="t " style="left:634px;top:536.59px;font-size:13.5px;color:#1e2b4d;letter-spacing:0.18px;">05:57 PM</div><div class="t " style="left:759px;top:517.69px;font-size:13.5px;color:#1e2b4d;letter-spacing:0.634px;">01/24/2023</div><div class="t " style="left:759px;top:536.59px;font-size:13.5px;color:#1e2b4d;letter-spacing:0.18px;">05:57 PM</div><div class="t " style="left:885px;top:527.99px;font-size:13.5px;color:#1e2b4d;letter-spacing:0.277px;">Completed</div><svg style="left:1007.5px;top:523px;" width="16" height="20" viewBox="0 0 16 20"><path d="M2 1 H10 L15 6 V18 Q15 19 14 19 H2 Q1 19 1 18 V2 Q1 1 2 1 Z" fill="none" stroke="#4150b5" stroke-width="2" stroke-linejoin="round"/><path d="M9.5 1 L15 6.5 H9.5 Z" fill="#4150b5"/><path d="M8 9.5 V16.5 M4.5 13 H11.5" stroke="#4150b5" stroke-width="2"/></svg><div class="t " style="left:1047px;top:528.04px;font-size:13.6px;color:#4150b5;letter-spacing:-0.033px;">Return</div><svg style="left:1109px;top:513px;" width="95" height="40" viewBox="0 0 95 40"><path d="M9.20 11.00 L11.02 12.30 L12.85 11.00 L14.68 12.30 L16.50 11.00 L18.32 12.30 L20.15 11.00 L21.98 12.30 L23.80 11.00 L23.80 14.20 L9.20 14.20 Z" fill="#4150b5"/><path d="M10.1 25 V13 M22.9 13 V28.3 Q22.9 29.85 21.3 29.85 H8.6 Q6.8 29.85 6.8 27.8 Q6.8 25.7 8.6 25.7 H18.9 V29.5" fill="none" stroke="#4150b5" stroke-width="1.8" stroke-linejoin="round"/><rect x="12.1" y="16.1" width="5.7" height="1.5" fill="#4150b5"/><rect x="19" y="16.1" width="2" height="1.5" fill="#4150b5"/><rect x="12.1" y="19.3" width="5.7" height="1.5" fill="#4150b5"/><rect x="19" y="19.3" width="2" height="1.5" fill="#4150b5"/><path d="M42 25 V14.3 H44.3 M52.3 14.3 H54.8 V28.3 Q54.8 29.85 53.2 29.85 H40.6 Q38.8 29.85 38.8 27.8 Q38.8 25.7 40.6 25.7 H50.9 V29.5" fill="none" stroke="#4150b5" stroke-width="1.8" stroke-linejoin="round"/><circle cx="45.6" cy="12.6" r="1.7" fill="none" stroke="#4150b5" stroke-width="1.5"/><circle cx="51.1" cy="12.6" r="1.7" fill="none" stroke="#4150b5" stroke-width="1.5"/><path d="M48.35 14.2 L45 18.6 M48.35 14.2 L51.7 18.6" fill="none" stroke="#4150b5" stroke-width="1.6"/><path d="M70.00 11.00 L72.24 12.50 L74.47 11.00 L76.71 12.50 L78.95 11.00 L81.19 12.50 L83.43 11.00 L85.66 12.50 L87.90 11.00 L87.90 31.00 L85.66 29.60 L83.43 31.00 L81.19 29.60 L78.95 31.00 L76.71 29.60 L74.47 31.00 L72.24 29.60 L70.00 31.00 Z" fill="#4150b5"/><rect x="72.8" y="15.9" width="12.3" height="1.9" fill="#f0f2fa"/><rect x="72.8" y="20.0" width="12.3" height="1.9" fill="#f0f2fa"/><rect x="72.8" y="24.1" width="12.3" height="1.9" fill="#f0f2fa"/></svg><div class="a " style="left:0px;top:553px;width:1208px;height:40px;background:#ffffff;"></div><div class="a " style="left:9px;top:562px;width:22px;height:22px;background:transparent;border:2px solid #4150b5;border-radius:3px"></div><div class="t " style="left:48.25px;top:567.99px;font-size:13.5px;color:#4150b5;letter-spacing:0.219px;">SO-0032725</div><div class="t " style="left:165px;top:567.99px;font-size:13.5px;color:#1e2b4d;letter-spacing:0.069px;">Spring Valley</div><div class="t " style="left:282.25px;top:567.99px;font-size:13.5px;color:#1e2b4d;letter-spacing:0.38px;">Walk-in</div><div class="t " style="left:517px;top:567.99px;font-size:13.5px;color:#1e2b4d;letter-spacing:0.26px;">$1.05</div><div class="t " style="left:634px;top:557.69px;font-size:13.5px;color:#1e2b4d;letter-spacing:0.634px;">01/24/2023</div><div class="t " style="left:634px;top:576.59px;font-size:13.5px;color:#1e2b4d;letter-spacing:0.18px;">05:57 PM</div><div class="t " style="left:759px;top:557.69px;font-size:13.5px;color:#1e2b4d;letter-spacing:0.634px;">01/24/2023</div><div class="t " style="left:759px;top:576.59px;font-size:13.5px;color:#1e2b4d;letter-spacing:0.18px;">05:57 PM</div><div class="t " style="left:885px;top:567.99px;font-size:13.5px;color:#1e2b4d;letter-spacing:0.277px;">Completed</div><svg style="left:1007.5px;top:563px;" width="16" height="20" viewBox="0 0 16 20"><path d="M2 1 H10 L15 6 V18 Q15 19 14 19 H2 Q1 19 1 18 V2 Q1 1 2 1 Z" fill="none" stroke="#4150b5" stroke-width="2" stroke-linejoin="round"/><path d="M9.5 1 L15 6.5 H9.5 Z" fill="#4150b5"/><path d="M8 9.5 V16.5 M4.5 13 H11.5" stroke="#4150b5" stroke-width="2"/></svg><div class="t " style="left:1047px;top:568.04px;font-size:13.6px;color:#4150b5;letter-spacing:-0.033px;">Return</div><svg style="left:1109px;top:553px;" width="95" height="40" viewBox="0 0 95 40"><path d="M9.20 11.00 L11.02 12.30 L12.85 11.00 L14.68 12.30 L16.50 11.00 L18.32 12.30 L20.15 11.00 L21.98 12.30 L23.80 11.00 L23.80 14.20 L9.20 14.20 Z" fill="#4150b5"/><path d="M10.1 25 V13 M22.9 13 V28.3 Q22.9 29.85 21.3 29.85 H8.6 Q6.8 29.85 6.8 27.8 Q6.8 25.7 8.6 25.7 H18.9 V29.5" fill="none" stroke="#4150b5" stroke-width="1.8" stroke-linejoin="round"/><rect x="12.1" y="16.1" width="5.7" height="1.5" fill="#4150b5"/><rect x="19" y="16.1" width="2" height="1.5" fill="#4150b5"/><rect x="12.1" y="19.3" width="5.7" height="1.5" fill="#4150b5"/><rect x="19" y="19.3" width="2" height="1.5" fill="#4150b5"/><path d="M42 25 V14.3 H44.3 M52.3 14.3 H54.8 V28.3 Q54.8 29.85 53.2 29.85 H40.6 Q38.8 29.85 38.8 27.8 Q38.8 25.7 40.6 25.7 H50.9 V29.5" fill="none" stroke="#4150b5" stroke-width="1.8" stroke-linejoin="round"/><circle cx="45.6" cy="12.6" r="1.7" fill="none" stroke="#4150b5" stroke-width="1.5"/><circle cx="51.1" cy="12.6" r="1.7" fill="none" stroke="#4150b5" stroke-width="1.5"/><path d="M48.35 14.2 L45 18.6 M48.35 14.2 L51.7 18.6" fill="none" stroke="#4150b5" stroke-width="1.6"/><path d="M70.00 11.00 L72.24 12.50 L74.47 11.00 L76.71 12.50 L78.95 11.00 L81.19 12.50 L83.43 11.00 L85.66 12.50 L87.90 11.00 L87.90 31.00 L85.66 29.60 L83.43 31.00 L81.19 29.60 L78.95 31.00 L76.71 29.60 L74.47 31.00 L72.24 29.60 L70.00 31.00 Z" fill="#4150b5"/><rect x="72.8" y="15.9" width="12.3" height="1.9" fill="#ffffff"/><rect x="72.8" y="20.0" width="12.3" height="1.9" fill="#ffffff"/><rect x="72.8" y="24.1" width="12.3" height="1.9" fill="#ffffff"/></svg><div class="a " style="left:0px;top:593px;width:1208px;height:40px;background:#f0f2fa;"></div><div class="a " style="left:9px;top:602px;width:22px;height:22px;background:transparent;border:2px solid #4150b5;border-radius:3px"></div><div class="t " style="left:48.25px;top:607.99px;font-size:13.5px;color:#4150b5;letter-spacing:0.219px;">SO-0032719</div><div class="t " style="left:165px;top:607.99px;font-size:13.5px;color:#1e2b4d;letter-spacing:0.069px;">Spring Valley</div><div class="t " style="left:282.25px;top:607.99px;font-size:13.5px;color:#1e2b4d;letter-spacing:0.38px;">Walk-in</div><div class="t " style="left:517px;top:607.99px;font-size:13.5px;color:#1e2b4d;letter-spacing:0.26px;">$1.05</div><div class="t " style="left:634px;top:597.69px;font-size:13.5px;color:#1e2b4d;letter-spacing:0.634px;">01/24/2023</div><div class="t " style="left:634px;top:616.59px;font-size:13.5px;color:#1e2b4d;letter-spacing:0.18px;">05:57 PM</div><div class="t " style="left:759px;top:597.69px;font-size:13.5px;color:#1e2b4d;letter-spacing:0.634px;">01/24/2023</div><div class="t " style="left:759px;top:616.59px;font-size:13.5px;color:#1e2b4d;letter-spacing:0.18px;">05:57 PM</div><div class="t " style="left:885px;top:607.99px;font-size:13.5px;color:#1e2b4d;letter-spacing:0.277px;">Completed</div><svg style="left:1007.5px;top:603px;" width="16" height="20" viewBox="0 0 16 20"><path d="M2 1 H10 L15 6 V18 Q15 19 14 19 H2 Q1 19 1 18 V2 Q1 1 2 1 Z" fill="none" stroke="#4150b5" stroke-width="2" stroke-linejoin="round"/><path d="M9.5 1 L15 6.5 H9.5 Z" fill="#4150b5"/><path d="M8 9.5 V16.5 M4.5 13 H11.5" stroke="#4150b5" stroke-width="2"/></svg><div class="t " style="left:1047px;top:608.04px;font-size:13.6px;color:#4150b5;letter-spacing:-0.033px;">Return</div><svg style="left:1109px;top:593px;" width="95" height="40" viewBox="0 0 95 40"><path d="M9.20 11.00 L11.02 12.30 L12.85 11.00 L14.68 12.30 L16.50 11.00 L18.32 12.30 L20.15 11.00 L21.98 12.30 L23.80 11.00 L23.80 14.20 L9.20 14.20 Z" fill="#4150b5"/><path d="M10.1 25 V13 M22.9 13 V28.3 Q22.9 29.85 21.3 29.85 H8.6 Q6.8 29.85 6.8 27.8 Q6.8 25.7 8.6 25.7 H18.9 V29.5" fill="none" stroke="#4150b5" stroke-width="1.8" stroke-linejoin="round"/><rect x="12.1" y="16.1" width="5.7" height="1.5" fill="#4150b5"/><rect x="19" y="16.1" width="2" height="1.5" fill="#4150b5"/><rect x="12.1" y="19.3" width="5.7" height="1.5" fill="#4150b5"/><rect x="19" y="19.3" width="2" height="1.5" fill="#4150b5"/><path d="M42 25 V14.3 H44.3 M52.3 14.3 H54.8 V28.3 Q54.8 29.85 53.2 29.85 H40.6 Q38.8 29.85 38.8 27.8 Q38.8 25.7 40.6 25.7 H50.9 V29.5" fill="none" stroke="#4150b5" stroke-width="1.8" stroke-linejoin="round"/><circle cx="45.6" cy="12.6" r="1.7" fill="none" stroke="#4150b5" stroke-width="1.5"/><circle cx="51.1" cy="12.6" r="1.7" fill="none" stroke="#4150b5" stroke-width="1.5"/><path d="M48.35 14.2 L45 18.6 M48.35 14.2 L51.7 18.6" fill="none" stroke="#4150b5" stroke-width="1.6"/><path d="M70.00 11.00 L72.24 12.50 L74.47 11.00 L76.71 12.50 L78.95 11.00 L81.19 12.50 L83.43 11.00 L85.66 12.50 L87.90 11.00 L87.90 31.00 L85.66 29.60 L83.43 31.00 L81.19 29.60 L78.95 31.00 L76.71 29.60 L74.47 31.00 L72.24 29.60 L70.00 31.00 Z" fill="#4150b5"/><rect x="72.8" y="15.9" width="12.3" height="1.9" fill="#f0f2fa"/><rect x="72.8" y="20.0" width="12.3" height="1.9" fill="#f0f2fa"/><rect x="72.8" y="24.1" width="12.3" height="1.9" fill="#f0f2fa"/></svg><div class="a " style="left:0px;top:633px;width:1208px;height:40px;background:#ffffff;"></div><div class="a " style="left:9px;top:642px;width:22px;height:22px;background:transparent;border:2px solid #4150b5;border-radius:3px"></div><div class="t " style="left:48.25px;top:647.99px;font-size:13.5px;color:#4150b5;letter-spacing:0.219px;">SO-0032723</div><div class="t " style="left:165px;top:647.99px;font-size:13.5px;color:#1e2b4d;letter-spacing:0.069px;">Spring Valley</div><div class="t " style="left:282.25px;top:647.99px;font-size:13.5px;color:#1e2b4d;letter-spacing:0.38px;">Walk-in</div><div class="t " style="left:517px;top:647.99px;font-size:13.5px;color:#1e2b4d;letter-spacing:0.26px;">$1.05</div><div class="t " style="left:634px;top:637.69px;font-size:13.5px;color:#1e2b4d;letter-spacing:0.634px;">01/24/2023</div><div class="t " style="left:634px;top:656.59px;font-size:13.5px;color:#1e2b4d;letter-spacing:0.18px;">05:57 PM</div><div class="t " style="left:759px;top:637.69px;font-size:13.5px;color:#1e2b4d;letter-spacing:0.634px;">01/24/2023</div><div class="t " style="left:759px;top:656.59px;font-size:13.5px;color:#1e2b4d;letter-spacing:0.18px;">05:57 PM</div><div class="t " style="left:885px;top:647.99px;font-size:13.5px;color:#1e2b4d;letter-spacing:0.277px;">Completed</div><svg style="left:1007.5px;top:643px;" width="16" height="20" viewBox="0 0 16 20"><path d="M2 1 H10 L15 6 V18 Q15 19 14 19 H2 Q1 19 1 18 V2 Q1 1 2 1 Z" fill="none" stroke="#4150b5" stroke-width="2" stroke-linejoin="round"/><path d="M9.5 1 L15 6.5 H9.5 Z" fill="#4150b5"/><path d="M8 9.5 V16.5 M4.5 13 H11.5" stroke="#4150b5" stroke-width="2"/></svg><div class="t " style="left:1047px;top:648.04px;font-size:13.6px;color:#4150b5;letter-spacing:-0.033px;">Return</div><svg style="left:1109px;top:633px;" width="95" height="40" viewBox="0 0 95 40"><path d="M9.20 11.00 L11.02 12.30 L12.85 11.00 L14.68 12.30 L16.50 11.00 L18.32 12.30 L20.15 11.00 L21.98 12.30 L23.80 11.00 L23.80 14.20 L9.20 14.20 Z" fill="#4150b5"/><path d="M10.1 25 V13 M22.9 13 V28.3 Q22.9 29.85 21.3 29.85 H8.6 Q6.8 29.85 6.8 27.8 Q6.8 25.7 8.6 25.7 H18.9 V29.5" fill="none" stroke="#4150b5" stroke-width="1.8" stroke-linejoin="round"/><rect x="12.1" y="16.1" width="5.7" height="1.5" fill="#4150b5"/><rect x="19" y="16.1" width="2" height="1.5" fill="#4150b5"/><rect x="12.1" y="19.3" width="5.7" height="1.5" fill="#4150b5"/><rect x="19" y="19.3" width="2" height="1.5" fill="#4150b5"/><path d="M42 25 V14.3 H44.3 M52.3 14.3 H54.8 V28.3 Q54.8 29.85 53.2 29.85 H40.6 Q38.8 29.85 38.8 27.8 Q38.8 25.7 40.6 25.7 H50.9 V29.5" fill="none" stroke="#4150b5" stroke-width="1.8" stroke-linejoin="round"/><circle cx="45.6" cy="12.6" r="1.7" fill="none" stroke="#4150b5" stroke-width="1.5"/><circle cx="51.1" cy="12.6" r="1.7" fill="none" stroke="#4150b5" stroke-width="1.5"/><path d="M48.35 14.2 L45 18.6 M48.35 14.2 L51.7 18.6" fill="none" stroke="#4150b5" stroke-width="1.6"/><path d="M70.00 11.00 L72.24 12.50 L74.47 11.00 L76.71 12.50 L78.95 11.00 L81.19 12.50 L83.43 11.00 L85.66 12.50 L87.90 11.00 L87.90 31.00 L85.66 29.60 L83.43 31.00 L81.19 29.60 L78.95 31.00 L76.71 29.60 L74.47 31.00 L72.24 29.60 L70.00 31.00 Z" fill="#4150b5"/><rect x="72.8" y="15.9" width="12.3" height="1.9" fill="#ffffff"/><rect x="72.8" y="20.0" width="12.3" height="1.9" fill="#ffffff"/><rect x="72.8" y="24.1" width="12.3" height="1.9" fill="#ffffff"/></svg><div class="a " style="left:0px;top:673px;width:1208px;height:40px;background:#f0f2fa;"></div><div class="a " style="left:9px;top:682px;width:22px;height:22px;background:transparent;border:2px solid #4150b5;border-radius:3px"></div><div class="t " style="left:48.25px;top:687.99px;font-size:13.5px;color:#4150b5;letter-spacing:0.219px;">SO-0032721</div><div class="t " style="left:165px;top:687.99px;font-size:13.5px;color:#1e2b4d;letter-spacing:0.069px;">Spring Valley</div><div class="t " style="left:282.25px;top:687.99px;font-size:13.5px;color:#1e2b4d;letter-spacing:0.38px;">Walk-in</div><div class="t " style="left:517px;top:687.99px;font-size:13.5px;color:#1e2b4d;letter-spacing:0.26px;">$1.05</div><div class="t " style="left:634px;top:677.69px;font-size:13.5px;color:#1e2b4d;letter-spacing:0.634px;">01/24/2023</div><div class="t " style="left:634px;top:696.59px;font-size:13.5px;color:#1e2b4d;letter-spacing:0.18px;">05:57 PM</div><div class="t " style="left:759px;top:677.69px;font-size:13.5px;color:#1e2b4d;letter-spacing:0.634px;">01/24/2023</div><div class="t " style="left:759px;top:696.59px;font-size:13.5px;color:#1e2b4d;letter-spacing:0.18px;">05:57 PM</div><div class="t " style="left:885px;top:687.99px;font-size:13.5px;color:#1e2b4d;letter-spacing:0.277px;">Completed</div><svg style="left:1007.5px;top:683px;" width="16" height="20" viewBox="0 0 16 20"><path d="M2 1 H10 L15 6 V18 Q15 19 14 19 H2 Q1 19 1 18 V2 Q1 1 2 1 Z" fill="none" stroke="#4150b5" stroke-width="2" stroke-linejoin="round"/><path d="M9.5 1 L15 6.5 H9.5 Z" fill="#4150b5"/><path d="M8 9.5 V16.5 M4.5 13 H11.5" stroke="#4150b5" stroke-width="2"/></svg><div class="t " style="left:1047px;top:688.04px;font-size:13.6px;color:#4150b5;letter-spacing:-0.033px;">Return</div><svg style="left:1109px;top:673px;" width="95" height="40" viewBox="0 0 95 40"><path d="M9.20 11.00 L11.02 12.30 L12.85 11.00 L14.68 12.30 L16.50 11.00 L18.32 12.30 L20.15 11.00 L21.98 12.30 L23.80 11.00 L23.80 14.20 L9.20 14.20 Z" fill="#4150b5"/><path d="M10.1 25 V13 M22.9 13 V28.3 Q22.9 29.85 21.3 29.85 H8.6 Q6.8 29.85 6.8 27.8 Q6.8 25.7 8.6 25.7 H18.9 V29.5" fill="none" stroke="#4150b5" stroke-width="1.8" stroke-linejoin="round"/><rect x="12.1" y="16.1" width="5.7" height="1.5" fill="#4150b5"/><rect x="19" y="16.1" width="2" height="1.5" fill="#4150b5"/><rect x="12.1" y="19.3" width="5.7" height="1.5" fill="#4150b5"/><rect x="19" y="19.3" width="2" height="1.5" fill="#4150b5"/><path d="M42 25 V14.3 H44.3 M52.3 14.3 H54.8 V28.3 Q54.8 29.85 53.2 29.85 H40.6 Q38.8 29.85 38.8 27.8 Q38.8 25.7 40.6 25.7 H50.9 V29.5" fill="none" stroke="#4150b5" stroke-width="1.8" stroke-linejoin="round"/><circle cx="45.6" cy="12.6" r="1.7" fill="none" stroke="#4150b5" stroke-width="1.5"/><circle cx="51.1" cy="12.6" r="1.7" fill="none" stroke="#4150b5" stroke-width="1.5"/><path d="M48.35 14.2 L45 18.6 M48.35 14.2 L51.7 18.6" fill="none" stroke="#4150b5" stroke-width="1.6"/><path d="M70.00 11.00 L72.24 12.50 L74.47 11.00 L76.71 12.50 L78.95 11.00 L81.19 12.50 L83.43 11.00 L85.66 12.50 L87.90 11.00 L87.90 31.00 L85.66 29.60 L83.43 31.00 L81.19 29.60 L78.95 31.00 L76.71 29.60 L74.47 31.00 L72.24 29.60 L70.00 31.00 Z" fill="#4150b5"/><rect x="72.8" y="15.9" width="12.3" height="1.9" fill="#f0f2fa"/><rect x="72.8" y="20.0" width="12.3" height="1.9" fill="#f0f2fa"/><rect x="72.8" y="24.1" width="12.3" height="1.9" fill="#f0f2fa"/></svg><div class="a " style="left:0px;top:713px;width:1208px;height:40px;background:#ffffff;"></div><div class="a " style="left:9px;top:722px;width:22px;height:22px;background:transparent;border:2px solid #4150b5;border-radius:3px"></div><div class="t " style="left:48.25px;top:727.99px;font-size:13.5px;color:#4150b5;letter-spacing:0.219px;">SO-0032717</div><div class="t " style="left:165px;top:727.99px;font-size:13.5px;color:#1e2b4d;letter-spacing:0.069px;">Spring Valley</div><div class="t " style="left:282.25px;top:727.99px;font-size:13.5px;color:#1e2b4d;letter-spacing:0.38px;">Walk-in</div><div class="t " style="left:517px;top:727.99px;font-size:13.5px;color:#1e2b4d;letter-spacing:0.26px;">$1.05</div><div class="t " style="left:634px;top:717.69px;font-size:13.5px;color:#1e2b4d;letter-spacing:0.634px;">01/24/2023</div><div class="t " style="left:634px;top:736.59px;font-size:13.5px;color:#1e2b4d;letter-spacing:0.18px;">05:44 PM</div><div class="t " style="left:759px;top:717.69px;font-size:13.5px;color:#1e2b4d;letter-spacing:0.634px;">01/24/2023</div><div class="t " style="left:759px;top:736.59px;font-size:13.5px;color:#1e2b4d;letter-spacing:0.18px;">05:44 PM</div><div class="t " style="left:885px;top:727.99px;font-size:13.5px;color:#1e2b4d;letter-spacing:0.277px;">Completed</div><svg style="left:1007.5px;top:723px;" width="16" height="20" viewBox="0 0 16 20"><path d="M2 1 H10 L15 6 V18 Q15 19 14 19 H2 Q1 19 1 18 V2 Q1 1 2 1 Z" fill="none" stroke="#4150b5" stroke-width="2" stroke-linejoin="round"/><path d="M9.5 1 L15 6.5 H9.5 Z" fill="#4150b5"/><path d="M8 9.5 V16.5 M4.5 13 H11.5" stroke="#4150b5" stroke-width="2"/></svg><div class="t " style="left:1047px;top:728.04px;font-size:13.6px;color:#4150b5;letter-spacing:-0.033px;">Return</div><svg style="left:1109px;top:713px;" width="95" height="40" viewBox="0 0 95 40"><path d="M9.20 11.00 L11.02 12.30 L12.85 11.00 L14.68 12.30 L16.50 11.00 L18.32 12.30 L20.15 11.00 L21.98 12.30 L23.80 11.00 L23.80 14.20 L9.20 14.20 Z" fill="#4150b5"/><path d="M10.1 25 V13 M22.9 13 V28.3 Q22.9 29.85 21.3 29.85 H8.6 Q6.8 29.85 6.8 27.8 Q6.8 25.7 8.6 25.7 H18.9 V29.5" fill="none" stroke="#4150b5" stroke-width="1.8" stroke-linejoin="round"/><rect x="12.1" y="16.1" width="5.7" height="1.5" fill="#4150b5"/><rect x="19" y="16.1" width="2" height="1.5" fill="#4150b5"/><rect x="12.1" y="19.3" width="5.7" height="1.5" fill="#4150b5"/><rect x="19" y="19.3" width="2" height="1.5" fill="#4150b5"/><path d="M42 25 V14.3 H44.3 M52.3 14.3 H54.8 V28.3 Q54.8 29.85 53.2 29.85 H40.6 Q38.8 29.85 38.8 27.8 Q38.8 25.7 40.6 25.7 H50.9 V29.5" fill="none" stroke="#4150b5" stroke-width="1.8" stroke-linejoin="round"/><circle cx="45.6" cy="12.6" r="1.7" fill="none" stroke="#4150b5" stroke-width="1.5"/><circle cx="51.1" cy="12.6" r="1.7" fill="none" stroke="#4150b5" stroke-width="1.5"/><path d="M48.35 14.2 L45 18.6 M48.35 14.2 L51.7 18.6" fill="none" stroke="#4150b5" stroke-width="1.6"/><path d="M70.00 11.00 L72.24 12.50 L74.47 11.00 L76.71 12.50 L78.95 11.00 L81.19 12.50 L83.43 11.00 L85.66 12.50 L87.90 11.00 L87.90 31.00 L85.66 29.60 L83.43 31.00 L81.19 29.60 L78.95 31.00 L76.71 29.60 L74.47 31.00 L72.24 29.60 L70.00 31.00 Z" fill="#4150b5"/><rect x="72.8" y="15.9" width="12.3" height="1.9" fill="#ffffff"/><rect x="72.8" y="20.0" width="12.3" height="1.9" fill="#ffffff"/><rect x="72.8" y="24.1" width="12.3" height="1.9" fill="#ffffff"/></svg><div class="a " style="left:0px;top:753px;width:1208px;height:40px;background:#f0f2fa;"></div><div class="a " style="left:9px;top:6px;width:22px;height:22px;background:transparent;border:2px solid #4150b5;border-radius:3px"></div><div class="a " style="left:39px;top:0px;width:1px;height:757px;background:#dfe2ea;"></div><div class="a " style="left:156px;top:0px;width:1px;height:757px;background:#dfe2ea;"></div><div class="a " style="left:273px;top:0px;width:1px;height:757px;background:#dfe2ea;"></div><div class="a " style="left:390px;top:0px;width:1px;height:757px;background:#dfe2ea;"></div><div class="a " style="left:508px;top:0px;width:1px;height:757px;background:#dfe2ea;"></div><div class="a " style="left:625px;top:0px;width:1px;height:757px;background:#dfe2ea;"></div><div class="a " style="left:750px;top:0px;width:1px;height:757px;background:#dfe2ea;"></div><div class="a " style="left:876px;top:0px;width:1px;height:757px;background:#dfe2ea;"></div><div class="a " style="left:993px;top:0px;width:1px;height:757px;background:#dfe2ea;"></div><div class="a " style="left:1038px;top:0px;width:1px;height:757px;background:#dfe2ea;"></div><div class="a " style="left:1103px;top:0px;width:1px;height:757px;background:#dfe2ea;"></div><div class="a " style="left:1208px;top:0px;width:1px;height:757px;background:#dfe2ea;"></div><div class="a " style="left:1208px;top:33px;width:13px;height:724px;background:#ffffff;"></div><div class="a " style="left:1211px;top:33px;width:8px;height:262px;background:#dde0ea;"></div>
</div>
<div class="a " style="left:431px;top:978px;width:1221px;height:1px;background:#d5d9e2;"></div><div class="a " style="left:548px;top:377px;width:994px;height:551px;background:#f7f7f7;border:1px solid #9c9c9c;box-shadow:0 0 6px rgba(0,0,0,0.28),1px 3px 7px rgba(0,0,0,0.18);z-index:10"></div>
<div class="a" style="left:0;top:0;width:1919px;height:1037px;z-index:11">
<svg style="left:554px;top:386px;" width="16" height="16" viewBox="0 0 16 16"><defs><linearGradient id="gi" x1="0" y1="0" x2="0" y2="1"><stop offset="0" stop-color="#38b0ec"/><stop offset="1" stop-color="#1e97d8"/></linearGradient></defs><rect x="0" y="0" width="16" height="16" rx="2" fill="url(#gi)"/><rect x="5.8" y="2.2" width="4.4" height="5.2" fill="#fff"/><rect x="6.8" y="3.6" width="2.4" height="2.4" fill="#8fcdf0"/><path d="M3.2 6.4 H12.8 V8.6 H3.2 Z" fill="#a8dbf5"/><path d="M2.3 8.6 H13.7 V12.8 H2.3 Z" fill="#fff"/><rect x="4.3" y="10.6" width="7.4" height="0.9" fill="#2a97dc"/></svg>
<div class="t " style="left:575px;top:387.71px;font-size:11.8px;color:#2b2b2b;letter-spacing:-0.159px;">Print Preview</div>
<div class="a " style="left:1421px;top:394px;width:10px;height:1px;background:#1a1a1a;"></div>
<div class="a " style="left:1467px;top:389px;width:10px;height:10px;background:transparent;border:1px solid #1a1a1a"></div>
<svg style="left:1513px;top:389px;" width="10" height="10" viewBox="0 0 10 10"><path d="M0.3 0.3 L9.7 9.7 M9.7 0.3 L0.3 9.7" stroke="#1a1a1a" stroke-width="1.1"/></svg>
<svg style="left:557px;top:422px;" width="3" height="16" viewBox="0 0 3 16"><rect x="0" y="0" width="3" height="1" fill="#555"/><rect x="0" y="2" width="3" height="1" fill="#555"/><rect x="0" y="4" width="3" height="1" fill="#555"/><rect x="0" y="6" width="3" height="1" fill="#555"/><rect x="0" y="8" width="3" height="1" fill="#555"/><rect x="0" y="10" width="3" height="1" fill="#555"/><rect x="0" y="12" width="3" height="1" fill="#555"/><rect x="0" y="14" width="3" height="1" fill="#555"/></svg>
<svg style="left:568px;top:417px;" width="31" height="24" viewBox="0 0 31 24"><path d="M0 2 Q0 0 2 0 H10 L13 3 H24 Q26 3 26 5 V7 H6 L0 24 Z" fill="#d6ae82"/><path d="M6 9 H31 L25 24 H0 Z" fill="#d4a877"/></svg>
<svg style="left:610px;top:418px;" width="24" height="24" viewBox="0 0 24 24"><path d="M0 0 H20 L24 4 V24 H0 Z" fill="#5b5b5b"/><rect x="4" y="2.5" width="14" height="7" fill="#f7f7f7"/><rect x="6" y="3.5" width="3" height="5" fill="#5b5b5b"/><rect x="4" y="14" width="16" height="7.5" fill="#f7f7f7"/></svg>
<div class="a " style="left:646px;top:413px;width:1px;height:35px;background:#cfcfcf;"></div>
<svg style="left:658px;top:416px;" width="23" height="28" viewBox="0 0 23 28"><rect x="1.2" y="3" width="20.6" height="24" fill="none" stroke="#ecd9c4" stroke-width="2.4"/><rect x="7" y="0.5" width="9" height="4.5" rx="1" fill="#c9c9c9"/><text x="11.5" y="19" font-family="Liberation Sans" font-size="11" text-anchor="middle" fill="#c2c2c2">?</text></svg>
<svg style="left:694px;top:417px;" width="32" height="28" viewBox="0 0 32 28"><rect x="1" y="1" width="24" height="5.5" fill="none" stroke="#b8cbe0" stroke-width="1.8"/><rect x="1" y="9.5" width="18" height="5.5" fill="none" stroke="#b8cbe0" stroke-width="1.8"/><rect x="1" y="18" width="17" height="5.5" fill="none" stroke="#b8cbe0" stroke-width="1.8"/><path d="M20 11 L31 20 L26 20.5 L29 27 L27 28 L24 21.5 L20 25 Z" fill="#cfcfcf"/></svg>
<svg style="left:735px;top:417px;" width="28" height="27" viewBox="0 0 28 27"><path d="M3 2 H11 V16 H3 Z M17 2 H25 V16 H17 Z" fill="#5b5b5b"/><rect x="10" y="6" width="8" height="8" fill="#5b5b5b"/><circle cx="6.5" cy="20.5" r="5.2" fill="#f7f7f7" stroke="#5b5b5b" stroke-width="2.6"/><circle cx="21.5" cy="20.5" r="5.2" fill="#f7f7f7" stroke="#5b5b5b" stroke-width="2.6"/><path d="M1.2 20 L3 8 H10 V20 Z M26.8 20 L25 8 H18 V20 Z" fill="#5b5b5b"/><circle cx="6.5" cy="20.5" r="3.6" fill="#f7f7f7"/><circle cx="21.5" cy="20.5" r="3.6" fill="#f7f7f7"/></svg>
<div class="a " style="left:773px;top:413px;width:1px;height:35px;background:#cfcfcf;"></div>
<svg style="left:784px;top:417px;" width="28" height="28" viewBox="0 0 28 28"><path d="M5.5 8 V1 H22.5 V8" fill="none" stroke="#5b5b5b" stroke-width="2.2"/><path d="M0 10 Q0 8 2 8 H26 Q28 8 28 10 V22 H0 Z" fill="#5b5b5b"/><rect x="6.5" y="16" width="15" height="11" fill="#f7f7f7" stroke="#5b5b5b" stroke-width="2.2"/></svg>
<svg style="left:821px;top:417px;" width="32" height="29" viewBox="0 0 32 29"><path d="M5.5 8 V1 H22.5 V8" fill="none" stroke="#5b5b5b" stroke-width="2.2"/><path d="M0 10 Q0 8 2 8 H26 Q28 8 28 10 V22 H0 Z" fill="#5b5b5b"/><rect x="6.5" y="16" width="15" height="11" fill="#f7f7f7" stroke="#5b5b5b" stroke-width="2.2"/><path d="M25 16 L20 23 H24 L21 29 L30 21 H26 L29 16 Z" fill="#e8a14d"/></svg>
<svg style="left:864px;top:417px;" width="24" height="27" viewBox="0 0 24 27"><rect x="1" y="1" width="22" height="25" fill="none" stroke="#4572a5" stroke-width="2"/><path d="M5.5 1 V26 M18.5 1 V26 M1 5.5 H23 M1 21.5 H23" stroke="#4572a5" stroke-width="1.8"/></svg>
<svg style="left:901px;top:417px;" width="28" height="28" viewBox="0 0 28 28"><rect x="1" y="1" width="26" height="26" fill="none" stroke="#5b5b5b" stroke-width="2"/><path d="M6 6 L22 22" stroke="#3f73b0" stroke-width="2.2"/><path d="M5 5 H12 L5 12 Z M23 23 H16 L23 16 Z" fill="#3f73b0"/></svg>
<div class="a " style="left:938.5px;top:413px;width:1px;height:35px;background:#cfcfcf;"></div>
<svg style="left:951.5px;top:420px;" width="23" height="20" viewBox="0 0 23 20"><rect x="0" y="0" width="3.5" height="20" fill="#b9c9d9"/><path d="M22.5 0 V20 L7 10 Z" fill="#b9c9d9"/></svg>
<svg style="left:993px;top:420px;" width="16" height="20" viewBox="0 0 16 20"><path d="M16 0 V20 L0 10 Z" fill="#b9c9d9"/></svg>
<svg style="left:1035.8px;top:420px;" width="16" height="20" viewBox="0 0 16 20"><path d="M0 0 V20 L16 10 Z" fill="#b9c9d9"/></svg>
<svg style="left:1069px;top:420px;" width="22" height="20" viewBox="0 0 22 20"><path d="M0 0 V20 L16 10 Z" fill="#b9c9d9"/><rect x="18.5" y="0" width="3.5" height="20" fill="#b9c9d9"/></svg>
<svg style="left:1106px;top:416px;" width="28" height="28" viewBox="0 0 28 28"><circle cx="14" cy="14" r="12.8" fill="none" stroke="#3a6ea5" stroke-width="2.4"/><path d="M21.8 6.2 L17.5 17.5 L10.5 10.5 Z" fill="#d4573a"/><path d="M6.2 21.8 L10.5 10.5 L17.5 17.5 Z" fill="#3a6ea5"/><circle cx="14" cy="14" r="1.6" fill="#fff"/></svg>
<div class="a " style="left:1144px;top:413px;width:1px;height:35px;background:#cfcfcf;"></div>
<svg style="left:1157px;top:418px;" width="25" height="25" viewBox="0 0 25 25"><circle cx="10" cy="10" r="8.5" fill="none" stroke="#5b5b5b" stroke-width="2.2"/><path d="M16 16 L24 24" stroke="#5b5b5b" stroke-width="2.6"/><rect x="5" y="9" width="10" height="2.2" fill="#5b5b5b"/></svg>
<svg style="left:1196px;top:418px;" width="25" height="25" viewBox="0 0 25 25"><circle cx="10" cy="10" r="8.5" fill="none" stroke="#5b5b5b" stroke-width="2.2"/><path d="M16 16 L24 24" stroke="#5b5b5b" stroke-width="2.6"/></svg>
<svg style="left:1231px;top:428.5px;" width="8" height="5" viewBox="0 0 8 5"><path d="M0 0 H8 L4 4.5 Z" fill="#5b5b5b"/></svg>
<svg style="left:1250px;top:418px;" width="25" height="25" viewBox="0 0 25 25"><circle cx="10" cy="10" r="8.5" fill="none" stroke="#5b5b5b" stroke-width="2.2"/><path d="M16 16 L24 24" stroke="#5b5b5b" stroke-width="2.6"/><rect x="5" y="9" width="10" height="2.2" fill="#5b5b5b"/><rect x="8.9" y="5" width="2.2" height="10" fill="#5b5b5b"/></svg>
<div class="a " style="left:1286.5px;top:413px;width:1px;height:35px;background:#cfcfcf;"></div>
<svg style="left:1301px;top:418px;" width="20" height="26" viewBox="0 0 20 26"><path d="M1 1 H13 L19 7 V25 H1 Z" fill="none" stroke="#5b5b5b" stroke-width="2" stroke-linejoin="round"/><path d="M13 1 V7 H19" fill="none" stroke="#5b5b5b" stroke-width="1.6"/><rect x="4" y="10.5" width="12" height="1.8" fill="#5b5b5b"/><rect x="4" y="14.5" width="12" height="1.8" fill="#5b5b5b"/><rect x="4" y="18.5" width="12" height="1.8" fill="#5b5b5b"/></svg>
<svg style="left:1334px;top:428.5px;" width="8" height="5" viewBox="0 0 8 5"><path d="M0 0 H8 L4 4.5 Z" fill="#5b5b5b"/></svg>
<div class="a " style="left:1346px;top:411px;width:38px;height:38px;background:#bfbfbf;"></div>
<svg style="left:1355px;top:418px;" width="20" height="26" viewBox="0 0 20 26"><path d="M1 7 V1 H19 V7 H1" fill="none" stroke="#5b5b5b" stroke-width="2"/><path d="M1 25 V13 H13 L19 19 V25" fill="none" stroke="#5b5b5b" stroke-width="2"/><rect x="4" y="22.5" width="12" height="2" fill="#5b5b5b"/></svg>
<svg style="left:1390px;top:414px;" width="26" height="29" viewBox="0 0 26 29"><path d="M14 1 H22 L25 4 V13 H14 Z" fill="none" stroke="#c9c9c9" stroke-width="1.6" stroke-linejoin="round"/><path d="M0 16 H8 L11 19 V28 H0 Z" fill="none" stroke="#c9c9c9" stroke-width="1.6" stroke-linejoin="round"/><path d="M14 16 H22 L25 19 V28 H14 Z" fill="none" stroke="#c9c9c9" stroke-width="1.6" stroke-linejoin="round"/></svg>
<div class="a " style="left:1428.5px;top:413px;width:1px;height:35px;background:#cfcfcf;"></div>
<svg style="left:1441px;top:418px;" width="24" height="24" viewBox="0 0 24 24"><path d="M5 8 V1 H15 L22 8 V23 H5 V17" fill="none" stroke="#5b5b5b" stroke-width="2" stroke-linejoin="round"/><path d="M15 1 V8 H22" fill="none" stroke="#5b5b5b" stroke-width="1.6"/><path d="M0 15 H13 M9 10.5 L13.5 15 L9 19.5" fill="none" stroke="#6a9f8e" stroke-width="2.2"/></svg>
<svg style="left:1476px;top:428.5px;" width="8" height="5" viewBox="0 0 8 5"><path d="M0 0 H8 L4 4.5 Z" fill="#5b5b5b"/></svg>
<svg style="left:1526.5px;top:440.5px;" width="6" height="6" viewBox="0 0 6 6"><path d="M6 0 V6 H0 Z" fill="#444"/></svg>
<div class="a" style="left:553px;top:452px;width:983px;height:445px;overflow:hidden">
<div class="a " style="left:300px;top:3px;width:384px;height:460px;background:#ffffff;border:1px solid #0a6fc6"></div>
<svg style="left:0;top:0" width="983" height="445"><g stroke="#c6c6c6" stroke-width="1" stroke-dasharray="5 5"><line x1="319.5" y1="3" x2="319.5" y2="445"/><line x1="664.5" y1="3" x2="664.5" y2="445"/><line x1="310" y1="22.5" x2="683" y2="22.5"/></g></svg>
<div class="t " style="left:542.4000000000001px;top:22.56px;font-size:11.9px;color:#111;">From: devpace-testing</div>
<div class="t " style="left:542.4000000000001px;top:36.56px;font-size:11.9px;color:#111;">770 BROADWAY</div>
<div class="t " style="left:542.4000000000001px;top:50.56px;font-size:11.9px;color:#111;">NY, 10003, US</div>
<div class="t " style="left:543px;top:85.70px;font-size:11.0px;color:#222;font-weight:700;letter-spacing:0.7px;">SO#: SO-0032751</div>
<div class="t " style="left:543px;top:109.70px;font-size:11.0px;color:#222;font-weight:700;letter-spacing:0.6px;">Customer PO#:</div>
<div class="t " style="left:543px;top:134.70px;font-size:11.0px;color:#222;font-weight:700;letter-spacing:0.7px;">Phone: +1 914-677-0598</div>
<div class="t " style="left:543px;top:186.33px;font-size:12.8px;color:#222;font-weight:700;letter-spacing:0.43px;">Box 1 of 1</div>
</div>
<div class="a " style="left:553px;top:897px;width:983px;height:1px;background:#a8a8a8;"></div>
<div class="a " style="left:553px;top:898px;width:983px;height:24px;background:#efefef;"></div>
<div class="t " style="left:558px;top:904.80px;font-size:11.2px;color:#222;">Page:</div>
<div class="a " style="left:589px;top:901px;width:30px;height:18px;background:#ffffff;border:1px solid #a0a0a0"></div>
<div class="a " style="left:592px;top:904px;width:24px;height:12px;background:#dcdcdc;"></div>
<div class="t " style="left:600px;top:904.80px;font-size:11.2px;color:#333;">1</div>
<div class="t " style="left:621.5px;top:904.80px;font-size:11.2px;color:#222;">/ 1</div>
<div class="t " style="left:1350.8px;top:905.20px;font-size:11.0px;color:#333;">100%</div>
<div class="a " style="left:1386px;top:907.5px;width:8px;height:2px;background:#333;"></div>
<div class="a " style="left:1399px;top:907px;width:116px;height:2px;background:#a4a4a4;"></div>
<div class="a " style="left:1455px;top:902px;width:5px;height:12px;background:#444;"></div>
<div class="a " style="left:1402px;top:916px;width:1px;height:3px;background:#888;"></div>
<div class="a " style="left:1512px;top:916px;width:1px;height:3px;background:#888;"></div>
<div class="a " style="left:1520px;top:907px;width:8.5px;height:2px;background:#222;"></div>
<div class="a " style="left:1523.2px;top:903.5px;width:2px;height:8.5px;background:#222;"></div>
</div>
<svg style="left:0;top:0;z-index:12" width="1919" height="1037"><path d="M1668.5 332 L1638 301.5" stroke="#ff0000" stroke-width="2.8" stroke-linecap="round"/><path d="M1630 293.2 L1643 300 L1636.5 306 Z" fill="#ff0000"/></svg>
</body></html>
